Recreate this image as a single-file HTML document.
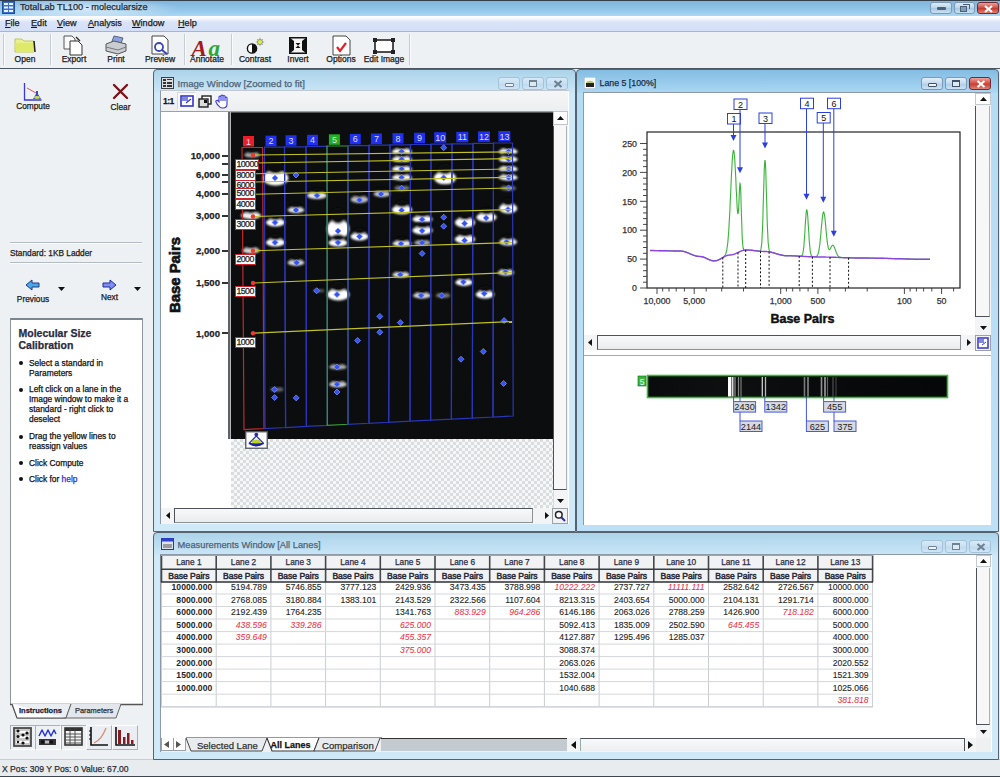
<!DOCTYPE html><html><head><meta charset="utf-8"><style>
*{margin:0;padding:0;box-sizing:border-box}
html,body{width:1000px;height:777px;overflow:hidden;background:#e9edf1;font-family:"Liberation Sans",sans-serif;font-size:11px;color:#000;position:relative}
.a{position:absolute}
.t{position:absolute;white-space:nowrap;line-height:1;-webkit-text-stroke:0.25px currentColor}
.tbtn{position:absolute;top:2px;height:12px;border:1px solid #7d9ab5;border-radius:3px;background:linear-gradient(#dcebf7,#b9d5ec 50%,#a7c7e2 51%,#c9e0f2)}
</style></head><body>
<div class="a" style="left:0px;top:0px;width:1000px;height:16px;background:linear-gradient(#7fb6dc,#93c6e8 60%,#a9d8f4);border-top:1px solid #33404c"></div>
<div class="a" style="left:0px;top:1px;width:200px;height:15px;background:radial-gradient(ellipse 95px 11px at 85px 8px,rgba(235,245,252,0.75),rgba(235,245,252,0.35) 60%,rgba(235,245,252,0) 100%)"></div>
<svg class="a" style="left:2px;top:1px" width="13" height="13"><rect x="0.5" y="0.5" width="12" height="12" fill="#3d70c6" stroke="#1d4fa0"/><g fill="#eaf2fc"><rect x="2" y="2" width="4" height="2"/><rect x="7" y="2" width="4" height="2"/><rect x="2" y="5.5" width="4" height="2"/><rect x="7" y="5.5" width="4" height="2"/><rect x="2" y="9" width="4" height="2"/><rect x="7" y="9" width="4" height="2"/></g></svg>
<div class="t" style="left:20px;top:3.25px;font-size:9.2px;color:#1f2c3a;">TotalLab TL100 - molecularsize</div>
<div class="tbtn" style="left:930px;width:22px"><div class="a" style="left:6px;top:4px;width:9px;height:3px;background:#4d6074;border-radius:1px"></div></div>
<div class="tbtn" style="left:954px;width:21px"><div class="a" style="left:5px;top:3px;width:7px;height:6px;border:1px solid #4d6074;background:#7f9cb8"></div><div class="a" style="left:8px;top:1px;width:7px;height:5px;border:1px solid #4d6074;border-bottom:none;border-left:none"></div></div>
<div class="tbtn" style="left:977px;width:22px;background:linear-gradient(#e9a29b,#d4463a 50%,#c5352a 51%,#de8173);border-color:#6e2a36"><svg class="a" style="left:6px;top:2px" width="9" height="8"><path d="M1 1L8 7M8 1L1 7" stroke="#fff" stroke-width="2.2"/></svg></div>
<div class="a" style="left:0px;top:16px;width:1000px;height:16px;background:linear-gradient(#ffffff,#f4f8fd 18%,#d9e4f8 40%,#d3dff7);border-bottom:1px solid #a9b5bf"></div>
<div class="t" style="left:5px;top:19.1px;font-size:9.1px;color:#1b1b1b;"><u>F</u>ile</div>
<div class="t" style="left:31px;top:19.1px;font-size:9.1px;color:#1b1b1b;"><u>E</u>dit</div>
<div class="t" style="left:57px;top:19.1px;font-size:9.1px;color:#1b1b1b;"><u>V</u>iew</div>
<div class="t" style="left:88px;top:19.1px;font-size:9.1px;color:#1b1b1b;"><u>A</u>nalysis</div>
<div class="t" style="left:132px;top:19.1px;font-size:9.1px;color:#1b1b1b;"><u>W</u>indow</div>
<div class="t" style="left:178px;top:19.1px;font-size:9.1px;color:#1b1b1b;"><u>H</u>elp</div>
<div class="a" style="left:0px;top:32px;width:1000px;height:37px;background:#edf1f3;border-bottom:1.2px solid #4c5660"></div>
<div class="a" style="left:3px;top:34px;width:1px;height:31px;background:#c5ccd3"></div>
<div class="a" style="left:4px;top:34px;width:1px;height:31px;background:#fafbfc"></div>
<div class="a" style="left:50px;top:34px;width:1px;height:31px;background:#c5ccd3"></div>
<div class="a" style="left:51px;top:34px;width:1px;height:31px;background:#fafbfc"></div>
<div class="a" style="left:184px;top:34px;width:1px;height:31px;background:#c5ccd3"></div>
<div class="a" style="left:185px;top:34px;width:1px;height:31px;background:#fafbfc"></div>
<div class="a" style="left:231px;top:34px;width:1px;height:31px;background:#c5ccd3"></div>
<div class="a" style="left:232px;top:34px;width:1px;height:31px;background:#fafbfc"></div>
<div class="a" style="left:409px;top:34px;width:1px;height:31px;background:#c5ccd3"></div>
<div class="a" style="left:410px;top:34px;width:1px;height:31px;background:#fafbfc"></div>
<div class="t" style="left:-75px;width:200px;text-align:center;top:55.01px;font-size:8.5px;color:#1a1a1a;">Open</div>
<div class="t" style="left:-26px;width:200px;text-align:center;top:55.01px;font-size:8.5px;color:#1a1a1a;">Export</div>
<div class="t" style="left:16px;width:200px;text-align:center;top:55.01px;font-size:8.5px;color:#1a1a1a;">Print</div>
<div class="t" style="left:60px;width:200px;text-align:center;top:55.01px;font-size:8.5px;color:#1a1a1a;">Preview</div>
<div class="t" style="left:107px;width:200px;text-align:center;top:55.01px;font-size:8.5px;color:#1a1a1a;">Annotate</div>
<div class="t" style="left:155px;width:200px;text-align:center;top:55.01px;font-size:8.5px;color:#1a1a1a;">Contrast</div>
<div class="t" style="left:198px;width:200px;text-align:center;top:55.01px;font-size:8.5px;color:#1a1a1a;">Invert</div>
<div class="t" style="left:241px;width:200px;text-align:center;top:55.01px;font-size:8.5px;color:#1a1a1a;">Options</div>
<div class="t" style="left:284px;width:200px;text-align:center;top:55.01px;font-size:8.5px;color:#1a1a1a;">Edit Image</div>
<svg class="a" style="left:13px;top:36px" width="24" height="19"><path d="M2 3h7l2 2h10v11H2z" fill="#e9f28a" stroke="#b7bd3c" stroke-width="0.8"/><path d="M2 7h19l1 9H3z" fill="#dfe96a"/><path d="M21 5l1 11" stroke="#222" stroke-width="1.5"/></svg>
<svg class="a" style="left:62px;top:35px" width="24" height="21"><path d="M2 1h8l3 3v10H2z" fill="#fafafa" stroke="#555"/><path d="M8 6h8l4 4v10H8z" fill="#fff" stroke="#333"/><path d="M14 2l4 4" stroke="#222" stroke-width="1.3"/></svg>
<svg class="a" style="left:104px;top:35px" width="24" height="21"><path d="M10 1l9 2-3 8-9-2z" fill="#8ca0e6" stroke="#567"/><path d="M2 9l8-3 12 3v7l-8 3-12-3z" fill="#c9cdd2" stroke="#555"/><path d="M2 12l12 3 8-3" stroke="#777" fill="none"/></svg>
<svg class="a" style="left:149px;top:35px" width="24" height="21"><path d="M3 1h12l4 4v14H3z" fill="#fff" stroke="#444"/><circle cx="10" cy="12" r="4" fill="none" stroke="#3a46b8" stroke-width="1.8"/><path d="M13 15l5 4" stroke="#3a46b8" stroke-width="2"/></svg>
<svg class="a" style="left:185px;top:33px" width="45" height="26"><text x="6.5" y="22.5" font-family="Liberation Serif" font-size="23" font-weight="bold" font-style="italic" fill="#a41a1a">A</text><text x="23.5" y="22.5" font-family="Liberation Serif" font-size="23" font-weight="bold" font-style="italic" fill="#2ea82a">a</text></svg>
<svg class="a" style="left:245px;top:36px" width="20" height="19"><circle cx="7" cy="12.5" r="4.6" fill="#fff" stroke="#111" stroke-width="1.4"/><path d="M7 7.9a4.6 4.6 0 0 1 0 9.2z" fill="#111"/><path d="M15 1.5v8.5M10.8 6h8.4M12 3l6 6M18 3l-6 6" stroke="#8a8fb0" stroke-width="0.7"/><circle cx="15" cy="6" r="2.6" fill="#d8ec4a" stroke="#555" stroke-width="0.5"/></svg>
<svg class="a" style="left:289px;top:37px" width="18" height="17"><rect x="0.5" y="0.5" width="17" height="16" fill="#f4f4f4" stroke="#111" stroke-width="1"/><path d="M0 0L5 4V13L0 17Z M18 0L13 4V13L18 17Z" fill="#111"/><path d="M6.5 6H11.5L9 8.5L11.5 11H6.5L9 8.5Z" fill="#111"/><path d="M0 0.8H18M0 16.2H18" stroke="#111" stroke-width="1.6"/></svg>
<svg class="a" style="left:331px;top:35px" width="22" height="21"><path d="M2 1h13l4 4v15H2z" fill="#fff" stroke="#444"/><path d="M6 12l3 4 6-8" stroke="#e0202a" stroke-width="2.2" fill="none"/></svg>
<svg class="a" style="left:372px;top:37px" width="24" height="18"><rect x="3" y="3" width="18" height="12" fill="#fff" stroke="#222" stroke-width="1.6"/><rect x="1" y="1" width="4" height="4" fill="#222"/><rect x="19" y="1" width="4" height="4" fill="#222"/><rect x="1" y="13" width="4" height="4" fill="#222"/><rect x="19" y="13" width="4" height="4" fill="#222"/></svg>
<div class="a" style="left:0px;top:69px;width:153px;height:691px;background:#edf1f4"></div>
<svg class="a" style="left:22px;top:83px" width="22" height="19"><path d="M2.5 0v17h17" stroke="#3a3ad0" stroke-width="1.3" fill="none"/><path d="M5 5l9 5" stroke="#e04050" stroke-width="0.9"/><path d="M14 8h2v3l3 5h-8l3-5z" fill="#3848c8"/><ellipse cx="15" cy="14.5" rx="3" ry="1.4" fill="#c8d84a"/></svg>
<div class="t" style="left:-67px;width:200px;text-align:center;top:102.31px;font-size:8.3px;color:#1a1a1a;">Compute</div>
<svg class="a" style="left:112px;top:83px" width="17" height="17"><path d="M2 2C6 6 10 10 15 15M15 2C11 6 6 11 2 15" stroke="#7a1418" stroke-width="2.4" fill="none" stroke-linecap="round"/></svg>
<div class="t" style="left:20.5px;width:200px;text-align:center;top:102.81px;font-size:8.3px;color:#1a1a1a;">Clear</div>
<div class="a" style="left:10px;top:242px;width:132px;height:1px;background:#b3bcc4"></div>
<div class="a" style="left:10px;top:243px;width:132px;height:1px;background:#fbfcfd"></div>
<div class="t" style="left:10px;top:248.81px;font-size:8.3px;color:#1a1a1a;">Standard: 1KB Ladder</div>
<div class="a" style="left:10px;top:262px;width:132px;height:1px;background:#b3bcc4"></div>
<div class="a" style="left:10px;top:263px;width:132px;height:1px;background:#fbfcfd"></div>
<svg class="a" style="left:25px;top:279px" width="15" height="12"><path d="M1 6L7 1v3h7v4H7v3z" fill="#4aa8e8" stroke="#1d3d8a" stroke-width="1"/></svg>
<div class="t" style="left:-67px;width:200px;text-align:center;top:294.81px;font-size:8.3px;color:#1a1a1a;">Previous</div>
<svg class="a" style="left:102px;top:279px" width="15" height="12"><path d="M14 6L8 1v3H1v4h7v3z" fill="#7f8ff0" stroke="#1d2d9a" stroke-width="1"/></svg>
<div class="t" style="left:9.5px;width:200px;text-align:center;top:292.81px;font-size:8.3px;color:#1a1a1a;">Next</div>
<svg class="a" style="left:58px;top:287px" width="7" height="4"><path d="M0 0h7L3.5 4z" fill="#111"/></svg>
<svg class="a" style="left:134px;top:287px" width="7" height="4"><path d="M0 0h7L3.5 4z" fill="#111"/></svg>
<div class="a" style="left:10px;top:318px;width:133px;height:387px;background:#fff;border:1px solid #8d979f;border-bottom:none;border-top:2px solid #7c868e"></div>
<div class="t" style="left:18.5px;top:327.5px;font-size:10.5px;color:#2a2a40;font-weight:bold;">Molecular Size</div>
<div class="t" style="left:18.5px;top:339.7px;font-size:10.5px;color:#2a2a40;font-weight:bold;">Calibration</div>
<div class="a" style="left:19px;top:360.9px;width:4px;height:4px;background:#111;border-radius:50%"></div>
<div class="t" style="left:29px;top:358.66px;font-size:8.4px;color:#111;">Select a standard in</div>
<div class="t" style="left:29px;top:368.66px;font-size:8.4px;color:#111;">Parameters</div>
<div class="a" style="left:19px;top:387.6px;width:4px;height:4px;background:#111;border-radius:50%"></div>
<div class="t" style="left:29px;top:385.36px;font-size:8.4px;color:#111;">Left click on a lane in the</div>
<div class="t" style="left:29px;top:395.36px;font-size:8.4px;color:#111;">Image window to make it a</div>
<div class="t" style="left:29px;top:405.36px;font-size:8.4px;color:#111;">standard - right click to</div>
<div class="t" style="left:29px;top:415.36px;font-size:8.4px;color:#111;">deselect</div>
<div class="a" style="left:19px;top:434.5px;width:4px;height:4px;background:#111;border-radius:50%"></div>
<div class="t" style="left:29px;top:432.26px;font-size:8.4px;color:#111;">Drag the yellow lines to</div>
<div class="t" style="left:29px;top:442.26px;font-size:8.4px;color:#111;">reassign values</div>
<div class="a" style="left:19px;top:460.9px;width:4px;height:4px;background:#111;border-radius:50%"></div>
<div class="t" style="left:29px;top:458.66px;font-size:8.4px;color:#111;">Click Compute</div>
<div class="a" style="left:19px;top:476.9px;width:4px;height:4px;background:#111;border-radius:50%"></div>
<div class="t" style="left:29px;top:474.66px;font-size:8.4px;color:#111;">Click for <span style="color:#2233dd">help</span></div>
<svg class="a" style="left:10px;top:703px" width="133" height="16"><path d="M0 1.5H133" stroke="#555" stroke-width="1.5"/><path d="M56 1V14H13L8 1" fill="#fff"/><path d="M2 1l5 14h49l5-14" fill="#eaeef2" stroke="#666" stroke-width="1"/><path d="M2 1l5 14h49" fill="#ffffff" stroke="#555" stroke-width="1.2"/><path d="M61 1l-5 14h50l5-14" fill="#e3e7eb" stroke="#666" stroke-width="1"/></svg>
<div class="t" style="left:19px;top:707.21px;font-size:7.5px;color:#222238;font-weight:bold;">Instructions</div>
<div class="t" style="left:75px;top:707.26px;font-size:7.4px;color:#333;">Parameters</div>
<div class="a" style="left:10px;top:725px;width:26px;height:25px;border:1px solid #aab3bb;border-right-color:#fff;border-bottom-color:#fff;background:#eef1f4"></div>
<div class="a" style="left:35px;top:725px;width:26px;height:25px;border:1px solid #aab3bb;border-right-color:#fff;border-bottom-color:#fff;background:#eef1f4"></div>
<div class="a" style="left:61px;top:725px;width:26px;height:25px;border:1px solid #aab3bb;border-right-color:#fff;border-bottom-color:#fff;background:#eef1f4"></div>
<div class="a" style="left:86px;top:725px;width:26px;height:25px;border:1px solid #fff;border-right-color:#aab3bb;border-bottom-color:#aab3bb;background:#eaeef2"></div>
<div class="a" style="left:112px;top:725px;width:26px;height:25px;border:1px solid #fff;border-right-color:#aab3bb;border-bottom-color:#aab3bb;background:#eaeef2"></div>
<svg class="a" style="left:13px;top:727px" width="19" height="20"><rect x="1" y="1" width="17" height="18" fill="#c8c8c8" stroke="#4a4a4a" stroke-width="1.8"/><g fill="#fff"><rect x="3" y="4" width="13" height="2"/><rect x="3" y="9" width="13" height="2"/><rect x="3" y="14" width="13" height="2"/></g><g fill="#111"><circle cx="5" cy="4" r="1.6"/><circle cx="14" cy="6" r="1.6"/><circle cx="5" cy="9.5" r="1.6"/><circle cx="10" cy="8" r="1.6"/><circle cx="14" cy="11" r="1.6"/><circle cx="10" cy="16" r="1.6"/><circle cx="5" cy="15" r="1.2"/></g></svg>
<svg class="a" style="left:38px;top:727px" width="20" height="20"><path d="M1 9L4 3L7 9L10 3L13 9L16 3L18 7" stroke="#2a35d8" stroke-width="1.5" fill="none" stroke-linejoin="round"/><rect x="1" y="12" width="17" height="6" fill="#333"/><rect x="3" y="13.5" width="3" height="3" fill="#111"/><rect x="7" y="13.5" width="4" height="3" fill="#bbb"/><rect x="12" y="13.5" width="3" height="3" fill="#111"/></svg>
<svg class="a" style="left:64px;top:727px" width="20" height="19"><rect x="1" y="1" width="17" height="17" fill="#f4f4f4" stroke="#333" stroke-width="1.6"/><rect x="1" y="1" width="17" height="3" fill="#333"/><path d="M1 7h17M1 10h17M1 13h17M1 16h17M6 1v17M11 1v17" stroke="#444" stroke-width="0.9"/></svg>
<svg class="a" style="left:89px;top:726px" width="20" height="21"><path d="M2 1v18h17" stroke="#111" stroke-width="1.6" fill="none"/><path d="M0 5h2M0 9h2M0 13h2" stroke="#111"/><path d="M5 17C10 15 14 10 17 2" stroke="#d88a70" stroke-width="1.2" fill="none"/></svg>
<svg class="a" style="left:114px;top:726px" width="22" height="21"><path d="M2 1v18h19" stroke="#111" stroke-width="1.6" fill="none"/><g fill="#8a1a22"><rect x="4" y="4" width="3" height="14"/><rect x="9" y="11" width="2.5" height="7"/><rect x="13" y="7" width="2.5" height="11"/><rect x="17" y="14" width="2.5" height="4"/></g></svg>
<div class="a" style="left:0px;top:759px;width:1000px;height:18px;background:#e9ecef;border-top:1px solid #c6cdd3"></div>
<div class="a" style="left:0px;top:776px;width:1000px;height:1px;background:#3e474f"></div>
<div class="t" style="left:2px;top:765.16px;font-size:8.6px;color:#2a2f38;">X Pos: 309 Y Pos: 0 Value: 67.00</div>
<div class="a" style="left:153px;top:69px;width:423px;height:463px;background:linear-gradient(#acd3e9,#cae6f7 22px,#d0e9f8 23px,#d0e9f8);border:1px solid #56636e;border-radius:4px 4px 0 0"></div>
<svg class="a" style="left:161px;top:77px" width="13" height="12"><rect x="0.5" y="0.5" width="12" height="11" fill="#d9dde2" stroke="#3c4046"/><g fill="#333"><rect x="2" y="2" width="3" height="2"/><rect x="6" y="2" width="5" height="1"/><rect x="2" y="5" width="3" height="2"/><rect x="6" y="5" width="5" height="2"/><rect x="2" y="8" width="3" height="2"/><rect x="6" y="8" width="5" height="2"/></g></svg>
<div class="t" style="left:177.5px;top:78.95px;font-size:9.6px;color:#4d6478;">Image Window [Zoomed to fit]</div>
<div style="position:absolute;top:77px;left:498.4px;width:22px;height:12.5px;border:1px solid #a3c1d8;border-radius:3px;background:linear-gradient(#d8eaf7,#c8e0f2 50%,#bcd8ee 51%,#d0e6f6)"></div>
<div style="position:absolute;top:77px;left:522.0px;width:22px;height:12.5px;border:1px solid #a3c1d8;border-radius:3px;background:linear-gradient(#d8eaf7,#c8e0f2 50%,#bcd8ee 51%,#d0e6f6)"></div>
<div style="position:absolute;top:77px;left:545.6px;width:22px;height:12.5px;border:1px solid #a3c1d8;border-radius:3px;background:linear-gradient(#d8eaf7,#c8e0f2 50%,#bcd8ee 51%,#d0e6f6)"></div>
<div class="a" style="left:505.0px;top:83px;width:8.5px;height:3.5px;border:1px solid #6f8294;border-radius:1px;background:#eef4f9"></div>
<div class="a" style="left:528.9px;top:80px;width:8.5px;height:6.5px;border:1px solid #6f8294;border-top-width:2px;background:#dfe9f2"></div>
<svg class="a" style="left:552.6px;top:80px" width="10" height="8"><path d="M1.5 1L8.5 7M8.5 1L1.5 7" stroke="#6d8092" stroke-width="2.1"/></svg>
<div class="a" style="left:160px;top:90px;width:409px;height:434px;background:#fff;border-top:1px solid #c0c9d0;border-left:1px solid #8d9aa5"></div>
<div class="a" style="left:161px;top:91px;width:407px;height:20px;background:linear-gradient(#f4f5f6,#eceff1)"></div>
<div class="t" style="left:163px;top:97.21px;font-size:8.5px;color:#14143a;font-weight:bold;letter-spacing:-0.5px">1:1</div>
<div class="a" style="left:177px;top:92px;width:19px;height:18px;border:1px solid #d4d8dc;border-right-color:#fff;border-bottom-color:#fff;background:#f8f9fa"></div>
<svg class="a" style="left:180px;top:95px" width="14" height="12"><rect x="1" y="1" width="12" height="10" fill="#fff" stroke="#3535c8" stroke-width="1.6"/><rect x="2" y="2" width="6" height="4" fill="#7d8ad8"/><path d="M6 8l5-4" stroke="#3535c8" stroke-width="1.2"/></svg>
<svg class="a" style="left:198px;top:95px" width="14" height="13"><rect x="4" y="1" width="9" height="8" fill="#fff" stroke="#222" stroke-width="1.4"/><rect x="1" y="4" width="9" height="8" fill="#ddd" stroke="#222" stroke-width="1.4"/><rect x="6" y="5" width="3" height="3" fill="#111"/></svg>
<svg class="a" style="left:215px;top:94px" width="14" height="15"><path d="M4 8V3a1 1 0 0 1 2 0v4V2a1 1 0 0 1 2 0v5V2.5a1 1 0 0 1 2 0V7V4a1 1 0 0 1 2 0v6c0 3-2 4-4 4H7c-2 0-3-2-5-4l-1-2a1 1 0 0 1 2-1z" fill="#fff" stroke="#3a3ad8" stroke-width="1.1"/></svg>
<div class="a" style="left:161px;top:111px;width:68px;height:397px;background:#fff"></div>
<div class="a" style="left:161px;top:111px;width:407px;height:1.2px;background:#9aa2a8"></div>
<div class="a" style="left:228px;top:112px;width:1.6px;height:327px;background:#5d6266"></div>
<div class="a" style="left:229.6px;top:112px;width:1.4px;height:327px;background:#b4b8bb"></div>
<div class="t" style="left:-80px;width:300px;text-align:right;top:151.05px;font-size:9.6px;color:#1e1e1e;font-weight:bold;">10,000</div>
<div class="a" style="left:222px;top:155px;width:6px;height:1.6px;background:#333"></div>
<div class="t" style="left:-80px;width:300px;text-align:right;top:169.75px;font-size:9.6px;color:#1e1e1e;font-weight:bold;">6,000</div>
<div class="a" style="left:222px;top:174px;width:6px;height:1.6px;background:#333"></div>
<div class="t" style="left:-80px;width:300px;text-align:right;top:189.35px;font-size:9.6px;color:#1e1e1e;font-weight:bold;">4,000</div>
<div class="a" style="left:222px;top:193px;width:6px;height:1.6px;background:#333"></div>
<div class="t" style="left:-80px;width:300px;text-align:right;top:211.45px;font-size:9.6px;color:#1e1e1e;font-weight:bold;">3,000</div>
<div class="a" style="left:222px;top:215px;width:6px;height:1.6px;background:#333"></div>
<div class="t" style="left:-80px;width:300px;text-align:right;top:245.95px;font-size:9.6px;color:#1e1e1e;font-weight:bold;">2,000</div>
<div class="a" style="left:222px;top:250px;width:6px;height:1.6px;background:#333"></div>
<div class="t" style="left:-80px;width:300px;text-align:right;top:278.15px;font-size:9.6px;color:#1e1e1e;font-weight:bold;">1,500</div>
<div class="a" style="left:222px;top:282px;width:6px;height:1.6px;background:#333"></div>
<div class="t" style="left:-80px;width:300px;text-align:right;top:328.55px;font-size:9.6px;color:#1e1e1e;font-weight:bold;">1,000</div>
<div class="a" style="left:222px;top:332px;width:6px;height:1.6px;background:#333"></div>
<div class="a" style="left:222px;top:163px;width:6px;height:1.6px;background:#333"></div>
<div class="a" style="left:222px;top:181px;width:6px;height:1.6px;background:#333"></div>
<div class="t" style="left:105px;top:268px;width:140px;text-align:center;font-size:14.9px;font-weight:bold;color:#111;-webkit-text-stroke:0.7px #111;transform:rotate(-90deg);transform-origin:70px 7px">Base Pairs</div>
<svg class="a" style="left:230px;top:111px" width="323" height="328" viewBox="230 111 323 328"><defs><filter id="bl" x="-50%" y="-100%" width="200%" height="300%"><feGaussianBlur stdDeviation="1.1 0.9"/></filter><filter id="bl2" x="-50%" y="-50%" width="200%" height="200%"><feGaussianBlur stdDeviation="0.5"/></filter></defs><rect x="231" y="112.3" width="322" height="327" fill="#0b0d0e"/><g filter="url(#bl)" opacity="0.67"><ellipse cx="252" cy="155" rx="7.84" ry="2.5" fill="#fff"/><ellipse cx="252" cy="151.70" rx="5.33" ry="2.00" fill="#0b0d0e"/></g><g filter="url(#bl)" opacity="0.95"><ellipse cx="251" cy="215.5" rx="10.08" ry="3.5" fill="#fff"/><ellipse cx="251" cy="210.88" rx="6.85" ry="2.80" fill="#0b0d0e"/></g><g filter="url(#bl)" opacity="0.84"><ellipse cx="251" cy="250.5" rx="8.96" ry="3.0" fill="#fff"/><ellipse cx="251" cy="246.54" rx="6.09" ry="2.40" fill="#0b0d0e"/></g><g filter="url(#bl)" opacity="1.00"><ellipse cx="275.5" cy="178" rx="12.88" ry="7.5" fill="#fff"/><ellipse cx="275.5" cy="168.10" rx="8.76" ry="6.00" fill="#0b0d0e"/></g><g filter="url(#bl)" opacity="1.00"><ellipse cx="275.5" cy="222.5" rx="9.52" ry="4.0" fill="#fff"/><ellipse cx="275.5" cy="217.22" rx="6.47" ry="3.20" fill="#0b0d0e"/></g><g filter="url(#bl)" opacity="1.00"><ellipse cx="275.5" cy="242.5" rx="9.52" ry="4.0" fill="#fff"/><ellipse cx="275.5" cy="237.22" rx="6.47" ry="3.20" fill="#0b0d0e"/></g><g filter="url(#bl)" opacity="0.39"><ellipse cx="277" cy="389.5" rx="6.72" ry="2.0" fill="#fff"/><ellipse cx="277" cy="386.86" rx="4.57" ry="1.60" fill="#0b0d0e"/></g><g filter="url(#bl)" opacity="0.90"><ellipse cx="296" cy="210" rx="8.40" ry="3.0" fill="#fff"/><ellipse cx="296" cy="206.04" rx="5.71" ry="2.40" fill="#0b0d0e"/></g><g filter="url(#bl)" opacity="0.84"><ellipse cx="296" cy="262.7" rx="8.40" ry="3.0" fill="#fff"/><ellipse cx="296" cy="258.74" rx="5.71" ry="2.40" fill="#0b0d0e"/></g><g filter="url(#bl)" opacity="0.90"><ellipse cx="317" cy="195.5" rx="10.08" ry="3.5" fill="#fff"/><ellipse cx="317" cy="190.88" rx="6.85" ry="2.80" fill="#0b0d0e"/></g><g filter="url(#bl)" opacity="0.34"><ellipse cx="319" cy="290.7" rx="5.60" ry="1.5" fill="#fff"/><ellipse cx="319" cy="288.72" rx="3.81" ry="1.20" fill="#0b0d0e"/></g><g filter="url(#bl)" opacity="1.00"><ellipse cx="338" cy="229" rx="11.20" ry="10.0" fill="#fff"/><ellipse cx="338" cy="215.80" rx="7.62" ry="8.00" fill="#0b0d0e"/></g><g filter="url(#bl)" opacity="1.00"><ellipse cx="338" cy="242.8" rx="9.52" ry="3.75" fill="#fff"/><ellipse cx="338" cy="237.85" rx="6.47" ry="3.00" fill="#0b0d0e"/></g><g filter="url(#bl)" opacity="1.00"><ellipse cx="338.3" cy="294.6" rx="11.20" ry="6.0" fill="#fff"/><ellipse cx="338.3" cy="286.68" rx="7.62" ry="4.80" fill="#0b0d0e"/></g><g filter="url(#bl)" opacity="0.67"><ellipse cx="338" cy="367" rx="8.96" ry="2.5" fill="#fff"/><ellipse cx="338" cy="363.70" rx="6.09" ry="2.00" fill="#0b0d0e"/></g><g filter="url(#bl)" opacity="0.78"><ellipse cx="338" cy="384.3" rx="8.96" ry="3.0" fill="#fff"/><ellipse cx="338" cy="380.34" rx="6.09" ry="2.40" fill="#0b0d0e"/></g><g filter="url(#bl)" opacity="0.73"><ellipse cx="359.5" cy="199.5" rx="8.96" ry="3.5" fill="#fff"/><ellipse cx="359.5" cy="194.88" rx="6.09" ry="2.80" fill="#0b0d0e"/></g><g filter="url(#bl)" opacity="1.00"><ellipse cx="359.5" cy="236.5" rx="8.96" ry="4.0" fill="#fff"/><ellipse cx="359.5" cy="231.22" rx="6.09" ry="3.20" fill="#0b0d0e"/></g><g filter="url(#bl)" opacity="0.78"><ellipse cx="382" cy="194" rx="8.40" ry="3.0" fill="#fff"/><ellipse cx="382" cy="190.04" rx="5.71" ry="2.40" fill="#0b0d0e"/></g><g filter="url(#bl)" opacity="1.00"><ellipse cx="402" cy="151.6" rx="10.08" ry="3.0" fill="#fff"/><ellipse cx="402" cy="147.64" rx="6.85" ry="2.40" fill="#0b0d0e"/></g><g filter="url(#bl)" opacity="1.00"><ellipse cx="402" cy="159.3" rx="10.08" ry="3.0" fill="#fff"/><ellipse cx="402" cy="155.34" rx="6.85" ry="2.40" fill="#0b0d0e"/></g><g filter="url(#bl)" opacity="1.00"><ellipse cx="402" cy="169" rx="10.08" ry="3.0" fill="#fff"/><ellipse cx="402" cy="165.04" rx="6.85" ry="2.40" fill="#0b0d0e"/></g><g filter="url(#bl)" opacity="1.00"><ellipse cx="402" cy="177.5" rx="10.08" ry="3.0" fill="#fff"/><ellipse cx="402" cy="173.54" rx="6.85" ry="2.40" fill="#0b0d0e"/></g><g filter="url(#bl)" opacity="0.45"><ellipse cx="402" cy="188.2" rx="7.84" ry="2.5" fill="#fff"/><ellipse cx="402" cy="184.90" rx="5.33" ry="2.00" fill="#0b0d0e"/></g><g filter="url(#bl)" opacity="1.00"><ellipse cx="402" cy="209.8" rx="10.08" ry="4.5" fill="#fff"/><ellipse cx="402" cy="203.86" rx="6.85" ry="3.60" fill="#0b0d0e"/></g><g filter="url(#bl)" opacity="0.95"><ellipse cx="402" cy="243.5" rx="9.52" ry="3.0" fill="#fff"/><ellipse cx="402" cy="239.54" rx="6.47" ry="2.40" fill="#0b0d0e"/></g><g filter="url(#bl)" opacity="0.90"><ellipse cx="401" cy="274.8" rx="8.68" ry="2.75" fill="#fff"/><ellipse cx="401" cy="271.17" rx="5.90" ry="2.20" fill="#0b0d0e"/></g><g filter="url(#bl)" opacity="1.00"><ellipse cx="422.5" cy="219.2" rx="10.08" ry="3.5" fill="#fff"/><ellipse cx="422.5" cy="214.58" rx="6.85" ry="2.80" fill="#0b0d0e"/></g><g filter="url(#bl)" opacity="1.00"><ellipse cx="422.5" cy="230.4" rx="10.08" ry="4.0" fill="#fff"/><ellipse cx="422.5" cy="225.12" rx="6.85" ry="3.20" fill="#0b0d0e"/></g><g filter="url(#bl)" opacity="0.67"><ellipse cx="422.5" cy="242.7" rx="8.40" ry="2.5" fill="#fff"/><ellipse cx="422.5" cy="239.40" rx="5.71" ry="2.00" fill="#0b0d0e"/></g><g filter="url(#bl)" opacity="0.84"><ellipse cx="422" cy="295.5" rx="8.96" ry="3.0" fill="#fff"/><ellipse cx="422" cy="291.54" rx="6.09" ry="2.40" fill="#0b0d0e"/></g><g filter="url(#bl)" opacity="1.00"><ellipse cx="445" cy="177.8" rx="11.20" ry="6.5" fill="#fff"/><ellipse cx="445" cy="169.22" rx="7.62" ry="5.20" fill="#0b0d0e"/></g><g filter="url(#bl)" opacity="0.45"><ellipse cx="443" cy="295.5" rx="7.28" ry="2.5" fill="#fff"/><ellipse cx="443" cy="292.20" rx="4.95" ry="2.00" fill="#0b0d0e"/></g><g filter="url(#bl)" opacity="1.00"><ellipse cx="465" cy="222.6" rx="10.08" ry="5.0" fill="#fff"/><ellipse cx="465" cy="216.00" rx="6.85" ry="4.00" fill="#0b0d0e"/></g><g filter="url(#bl)" opacity="1.00"><ellipse cx="465" cy="239.3" rx="10.08" ry="4.25" fill="#fff"/><ellipse cx="465" cy="233.69" rx="6.85" ry="3.40" fill="#0b0d0e"/></g><g filter="url(#bl)" opacity="1.00"><ellipse cx="464" cy="282.4" rx="8.68" ry="3.5" fill="#fff"/><ellipse cx="464" cy="277.78" rx="5.90" ry="2.80" fill="#0b0d0e"/></g><g filter="url(#bl)" opacity="1.00"><ellipse cx="486.5" cy="217.2" rx="10.08" ry="4.5" fill="#fff"/><ellipse cx="486.5" cy="211.26" rx="6.85" ry="3.60" fill="#0b0d0e"/></g><g filter="url(#bl)" opacity="1.00"><ellipse cx="485" cy="294.5" rx="9.24" ry="4.0" fill="#fff"/><ellipse cx="485" cy="289.22" rx="6.28" ry="3.20" fill="#0b0d0e"/></g><g filter="url(#bl)" opacity="1.00"><ellipse cx="508.2" cy="151.6" rx="9.52" ry="3.0" fill="#fff"/><ellipse cx="508.2" cy="147.64" rx="6.47" ry="2.40" fill="#0b0d0e"/></g><g filter="url(#bl)" opacity="1.00"><ellipse cx="508.2" cy="159.3" rx="9.52" ry="3.0" fill="#fff"/><ellipse cx="508.2" cy="155.34" rx="6.47" ry="2.40" fill="#0b0d0e"/></g><g filter="url(#bl)" opacity="1.00"><ellipse cx="508.2" cy="169" rx="9.52" ry="3.0" fill="#fff"/><ellipse cx="508.2" cy="165.04" rx="6.47" ry="2.40" fill="#0b0d0e"/></g><g filter="url(#bl)" opacity="1.00"><ellipse cx="508.2" cy="177.5" rx="9.52" ry="3.0" fill="#fff"/><ellipse cx="508.2" cy="173.54" rx="6.47" ry="2.40" fill="#0b0d0e"/></g><g filter="url(#bl)" opacity="0.45"><ellipse cx="508.2" cy="188.2" rx="7.84" ry="2.5" fill="#fff"/><ellipse cx="508.2" cy="184.90" rx="5.33" ry="2.00" fill="#0b0d0e"/></g><g filter="url(#bl)" opacity="1.00"><ellipse cx="508.2" cy="208.4" rx="8.96" ry="5.0" fill="#fff"/><ellipse cx="508.2" cy="201.80" rx="6.09" ry="4.00" fill="#0b0d0e"/></g><g filter="url(#bl)" opacity="0.95"><ellipse cx="508.2" cy="242" rx="8.96" ry="3.5" fill="#fff"/><ellipse cx="508.2" cy="237.38" rx="6.09" ry="2.80" fill="#0b0d0e"/></g><g filter="url(#bl)" opacity="0.95"><ellipse cx="506" cy="272.5" rx="8.12" ry="3.0" fill="#fff"/><ellipse cx="506" cy="268.54" rx="5.52" ry="2.40" fill="#0b0d0e"/></g><path d="M242 147.5L262.5 147.5L264 428.5L244 429.6Z" fill="none" stroke="#c02a2a" stroke-width="1.2"/><path d="M264.5 147.1L284.5 147.1L285.6 427.5L265 428.5Z" fill="none" stroke="#2a36b8" stroke-width="1.2"/><path d="M284.5 146.8L306 146.8L306.4 426.4L285.6 427.5Z" fill="none" stroke="#2a36b8" stroke-width="1.2"/><path d="M306 146.4L327 146.4L327.3 425.4L306.4 426.4Z" fill="none" stroke="#2a36b8" stroke-width="1.2"/><path d="M327 146.0L348 146.0L348 424.3L327.3 425.4Z" fill="none" stroke="#3a9a3a" stroke-width="1.2"/><path d="M348 145.6L369 145.6L369 423.3L348 424.3Z" fill="none" stroke="#2a36b8" stroke-width="1.2"/><path d="M369 145.2L390 145.2L388.7 422.3L369 423.3Z" fill="none" stroke="#2a36b8" stroke-width="1.2"/><path d="M390 144.9L410.5 144.9L410 421.2L388.7 422.3Z" fill="none" stroke="#2a36b8" stroke-width="1.2"/><path d="M410.5 144.5L431 144.5L430.6 420.2L410 421.2Z" fill="none" stroke="#2a36b8" stroke-width="1.2"/><path d="M431 144.1L452 144.1L451.4 419.1L430.6 420.2Z" fill="none" stroke="#2a36b8" stroke-width="1.2"/><path d="M452 143.8L473 143.8L472.3 418.1L451.4 419.1Z" fill="none" stroke="#2a36b8" stroke-width="1.2"/><path d="M473 143.4L493.5 143.4L493 417.0L472.3 418.1Z" fill="none" stroke="#2a36b8" stroke-width="1.2"/><path d="M493.5 143.0L512.5 143.0L513.2 416.0L493 417.0Z" fill="none" stroke="#2a36b8" stroke-width="1.2"/><path d="M275 175L278 178L275 181L272 178Z" fill="#3553f2" stroke="#7f95ff" stroke-width="0.7"/><path d="M275 219.5L278 222.5L275 225.5L272 222.5Z" fill="#3553f2" stroke="#7f95ff" stroke-width="0.7"/><path d="M275 239.5L278 242.5L275 245.5L272 242.5Z" fill="#3553f2" stroke="#7f95ff" stroke-width="0.7"/><path d="M274.6 386.5L277.6 389.5L274.6 392.5L271.6 389.5Z" fill="#3553f2" stroke="#7f95ff" stroke-width="0.7"/><path d="M274.6 394.5L277.6 397.5L274.6 400.5L271.6 397.5Z" fill="#3553f2" stroke="#7f95ff" stroke-width="0.7"/><path d="M296 172L299 175L296 178L293 175Z" fill="#3553f2" stroke="#7f95ff" stroke-width="0.7"/><path d="M296 207L299 210L296 213L293 210Z" fill="#3553f2" stroke="#7f95ff" stroke-width="0.7"/><path d="M296.6 259.7L299.6 262.7L296.6 265.7L293.6 262.7Z" fill="#3553f2" stroke="#7f95ff" stroke-width="0.7"/><path d="M296.2 394.9L299.2 397.9L296.2 400.9L293.2 397.9Z" fill="#3553f2" stroke="#7f95ff" stroke-width="0.7"/><path d="M317 192.5L320 195.5L317 198.5L314 195.5Z" fill="#3553f2" stroke="#7f95ff" stroke-width="0.7"/><path d="M316.7 287.7L319.7 290.7L316.7 293.7L313.7 290.7Z" fill="#3553f2" stroke="#7f95ff" stroke-width="0.7"/><path d="M338 228L341 231L338 234L335 231Z" fill="#3553f2" stroke="#7f95ff" stroke-width="0.7"/><path d="M338 239.5L341 242.5L338 245.5L335 242.5Z" fill="#3553f2" stroke="#7f95ff" stroke-width="0.7"/><path d="M337 291.6L340 294.6L337 297.6L334 294.6Z" fill="#3553f2" stroke="#7f95ff" stroke-width="0.7"/><path d="M337 364L340 367L337 370L334 367Z" fill="#3553f2" stroke="#7f95ff" stroke-width="0.7"/><path d="M337 381.3L340 384.3L337 387.3L334 384.3Z" fill="#3553f2" stroke="#7f95ff" stroke-width="0.7"/><path d="M337 389L340 392L337 395L334 392Z" fill="#3553f2" stroke="#7f95ff" stroke-width="0.7"/><path d="M359.5 197L362.5 200L359.5 203L356.5 200Z" fill="#3553f2" stroke="#7f95ff" stroke-width="0.7"/><path d="M359.5 233.5L362.5 236.5L359.5 239.5L356.5 236.5Z" fill="#3553f2" stroke="#7f95ff" stroke-width="0.7"/><path d="M357.6 337.5L360.6 340.5L357.6 343.5L354.6 340.5Z" fill="#3553f2" stroke="#7f95ff" stroke-width="0.7"/><path d="M381 191L384 194L381 197L378 194Z" fill="#3553f2" stroke="#7f95ff" stroke-width="0.7"/><path d="M379.8 313.4L382.8 316.4L379.8 319.4L376.8 316.4Z" fill="#3553f2" stroke="#7f95ff" stroke-width="0.7"/><path d="M379.8 329.2L382.8 332.2L379.8 335.2L376.8 332.2Z" fill="#3553f2" stroke="#7f95ff" stroke-width="0.7"/><path d="M401.6 148.6L404.6 151.6L401.6 154.6L398.6 151.6Z" fill="#3553f2" stroke="#7f95ff" stroke-width="0.7"/><path d="M401.6 156.3L404.6 159.3L401.6 162.3L398.6 159.3Z" fill="#3553f2" stroke="#7f95ff" stroke-width="0.7"/><path d="M401.6 166L404.6 169L401.6 172L398.6 169Z" fill="#3553f2" stroke="#7f95ff" stroke-width="0.7"/><path d="M401.6 174.5L404.6 177.5L401.6 180.5L398.6 177.5Z" fill="#3553f2" stroke="#7f95ff" stroke-width="0.7"/><path d="M401.6 185.2L404.6 188.2L401.6 191.2L398.6 188.2Z" fill="#3553f2" stroke="#7f95ff" stroke-width="0.7"/><path d="M401.6 207.3L404.6 210.3L401.6 213.3L398.6 210.3Z" fill="#3553f2" stroke="#7f95ff" stroke-width="0.7"/><path d="M401 240.8L404 243.8L401 246.8L398 243.8Z" fill="#3553f2" stroke="#7f95ff" stroke-width="0.7"/><path d="M400.3 271.7L403.3 274.7L400.3 277.7L397.3 274.7Z" fill="#3553f2" stroke="#7f95ff" stroke-width="0.7"/><path d="M400.3 319.6L403.3 322.6L400.3 325.6L397.3 322.6Z" fill="#3553f2" stroke="#7f95ff" stroke-width="0.7"/><path d="M422.1 216.5L425.1 219.5L422.1 222.5L419.1 219.5Z" fill="#3553f2" stroke="#7f95ff" stroke-width="0.7"/><path d="M422.1 227.8L425.1 230.8L422.1 233.8L419.1 230.8Z" fill="#3553f2" stroke="#7f95ff" stroke-width="0.7"/><path d="M422.1 239.7L425.1 242.7L422.1 245.7L419.1 242.7Z" fill="#3553f2" stroke="#7f95ff" stroke-width="0.7"/><path d="M422.1 250.5L425.1 253.5L422.1 256.5L419.1 253.5Z" fill="#3553f2" stroke="#7f95ff" stroke-width="0.7"/><path d="M421.1 292.5L424.1 295.5L421.1 298.5L418.1 295.5Z" fill="#3553f2" stroke="#7f95ff" stroke-width="0.7"/><path d="M443.7 144.7L446.7 147.7L443.7 150.7L440.7 147.7Z" fill="#3553f2" stroke="#7f95ff" stroke-width="0.7"/><path d="M443.7 174.8L446.7 177.8L443.7 180.8L440.7 177.8Z" fill="#3553f2" stroke="#7f95ff" stroke-width="0.7"/><path d="M443.7 214.2L446.7 217.2L443.7 220.2L440.7 217.2Z" fill="#3553f2" stroke="#7f95ff" stroke-width="0.7"/><path d="M443.7 223.2L446.7 226.2L443.7 229.2L440.7 226.2Z" fill="#3553f2" stroke="#7f95ff" stroke-width="0.7"/><path d="M441.8 292.5L444.8 295.5L441.8 298.5L438.8 295.5Z" fill="#3553f2" stroke="#7f95ff" stroke-width="0.7"/><path d="M464.6 220.4L467.6 223.4L464.6 226.4L461.6 223.4Z" fill="#3553f2" stroke="#7f95ff" stroke-width="0.7"/><path d="M464.6 237.4L467.6 240.4L464.6 243.4L461.6 240.4Z" fill="#3553f2" stroke="#7f95ff" stroke-width="0.7"/><path d="M463.4 279L466.4 282L463.4 285L460.4 282Z" fill="#3553f2" stroke="#7f95ff" stroke-width="0.7"/><path d="M461 356.2L464 359.2L461 362.2L458 359.2Z" fill="#3553f2" stroke="#7f95ff" stroke-width="0.7"/><path d="M486.2 215L489.2 218L486.2 221L483.2 218Z" fill="#3553f2" stroke="#7f95ff" stroke-width="0.7"/><path d="M484.2 290.6L487.2 293.6L484.2 296.6L481.2 293.6Z" fill="#3553f2" stroke="#7f95ff" stroke-width="0.7"/><path d="M483.3 348.5L486.3 351.5L483.3 354.5L480.3 351.5Z" fill="#3553f2" stroke="#7f95ff" stroke-width="0.7"/><path d="M508.6 148.6L511.6 151.6L508.6 154.6L505.6 151.6Z" fill="#3553f2" stroke="#7f95ff" stroke-width="0.7"/><path d="M508.6 156.3L511.6 159.3L508.6 162.3L505.6 159.3Z" fill="#3553f2" stroke="#7f95ff" stroke-width="0.7"/><path d="M508.6 166L511.6 169L508.6 172L505.6 169Z" fill="#3553f2" stroke="#7f95ff" stroke-width="0.7"/><path d="M508.6 174.5L511.6 177.5L508.6 180.5L505.6 177.5Z" fill="#3553f2" stroke="#7f95ff" stroke-width="0.7"/><path d="M508.6 185L511.6 188L508.6 191L505.6 188Z" fill="#3553f2" stroke="#7f95ff" stroke-width="0.7"/><path d="M508 206.5L511 209.5L508 212.5L505 209.5Z" fill="#3553f2" stroke="#7f95ff" stroke-width="0.7"/><path d="M506.5 239L509.5 242L506.5 245L503.5 242Z" fill="#3553f2" stroke="#7f95ff" stroke-width="0.7"/><path d="M505.5 269L508.5 272L505.5 275L502.5 272Z" fill="#3553f2" stroke="#7f95ff" stroke-width="0.7"/><path d="M504.1 317.6L507.1 320.6L504.1 323.6L501.1 320.6Z" fill="#3553f2" stroke="#7f95ff" stroke-width="0.7"/><path d="M503.6 380.4L506.6 383.4L503.6 386.4L500.6 383.4Z" fill="#3553f2" stroke="#7f95ff" stroke-width="0.7"/><path d="M253 155L512 151.9" stroke="#c2c226" stroke-width="1.15" fill="none"/><path d="M253 163L512 158.6" stroke="#c2c226" stroke-width="1.15" fill="none"/><path d="M253 173.75L512 169" stroke="#c2c226" stroke-width="1.15" fill="none"/><path d="M253 182L512 177.4" stroke="#c2c226" stroke-width="1.15" fill="none"/><path d="M253 194.25L512 188" stroke="#c2c226" stroke-width="1.15" fill="none"/><path d="M253 216.5L512 209.5" stroke="#c2c226" stroke-width="1.15" fill="none"/><path d="M253 250.8L512 242.5" stroke="#c2c226" stroke-width="1.15" fill="none"/><path d="M253 283L512 272.5" stroke="#c2c226" stroke-width="1.15" fill="none"/><path d="M253 333.2L512 321.6" stroke="#c2c226" stroke-width="1.15" fill="none"/><circle cx="253" cy="155" r="2.2" fill="#ee3a2a"/><circle cx="253" cy="163" r="2.2" fill="#ee3a2a"/><circle cx="253" cy="173.75" r="2.2" fill="#ee3a2a"/><circle cx="253" cy="182" r="2.2" fill="#ee3a2a"/><circle cx="253" cy="194.25" r="2.2" fill="#ee3a2a"/><circle cx="253" cy="216.5" r="2.2" fill="#ee3a2a"/><circle cx="253" cy="250.8" r="2.2" fill="#ee3a2a"/><circle cx="253" cy="283" r="2.2" fill="#ee3a2a"/><circle cx="253" cy="333.2" r="2.2" fill="#ee3a2a"/><rect x="243.0" y="136.0" width="11" height="10.5" fill="#ee1c24"/><text x="248.5" y="144.5" font-family="Liberation Sans" font-size="9" fill="#dde" text-anchor="middle">1</text><rect x="265.5" y="135.6" width="11" height="10.5" fill="#1f30f0"/><text x="271" y="144.1" font-family="Liberation Sans" font-size="9" fill="#dde" text-anchor="middle">2</text><rect x="285.5" y="135.2" width="11" height="10.5" fill="#1f30f0"/><text x="291" y="143.7" font-family="Liberation Sans" font-size="9" fill="#dde" text-anchor="middle">3</text><rect x="307.0" y="134.8" width="11" height="10.5" fill="#1f30f0"/><text x="312.5" y="143.2" font-family="Liberation Sans" font-size="9" fill="#dde" text-anchor="middle">4</text><rect x="328.9" y="134.3" width="11" height="10.5" fill="#22b022"/><text x="334.4" y="142.8" font-family="Liberation Sans" font-size="9" fill="#dde" text-anchor="middle">5</text><rect x="349.8" y="133.9" width="11" height="10.5" fill="#1f30f0"/><text x="355.3" y="142.4" font-family="Liberation Sans" font-size="9" fill="#dde" text-anchor="middle">6</text><rect x="370.9" y="133.5" width="11" height="10.5" fill="#1f30f0"/><text x="376.4" y="142.0" font-family="Liberation Sans" font-size="9" fill="#dde" text-anchor="middle">7</text><rect x="392.5" y="133.1" width="11" height="10.5" fill="#1f30f0"/><text x="398" y="141.6" font-family="Liberation Sans" font-size="9" fill="#dde" text-anchor="middle">8</text><rect x="414.1" y="132.7" width="11" height="10.5" fill="#1f30f0"/><text x="419.6" y="141.2" font-family="Liberation Sans" font-size="9" fill="#dde" text-anchor="middle">9</text><rect x="434.2" y="132.2" width="12" height="10.5" fill="#1f30f0"/><text x="440.2" y="140.8" font-family="Liberation Sans" font-size="9" fill="#dde" text-anchor="middle">10</text><rect x="456.3" y="131.8" width="12" height="10.5" fill="#1f30f0"/><text x="462.3" y="140.3" font-family="Liberation Sans" font-size="9" fill="#dde" text-anchor="middle">11</text><rect x="478.0" y="131.4" width="12" height="10.5" fill="#1f30f0"/><text x="484" y="139.9" font-family="Liberation Sans" font-size="9" fill="#dde" text-anchor="middle">12</text><rect x="498.4" y="131.0" width="12" height="10.5" fill="#1f30f0"/><text x="504.4" y="139.5" font-family="Liberation Sans" font-size="9" fill="#dde" text-anchor="middle">13</text></svg>
<div class="a" style="left:235px;top:159.1px;width:24px;height:11px;background:#fff;border:1.5px solid #d0222a"></div>
<div class="t" style="left:236.5px;top:160.16px;font-size:8.8px;color:#222;letter-spacing:-0.6px">10000</div>
<div class="a" style="left:235px;top:170.0px;width:21px;height:11px;background:#fff;border:1.5px solid #d0222a"></div>
<div class="t" style="left:236.5px;top:171.06px;font-size:8.8px;color:#222;letter-spacing:-0.6px">8000</div>
<div class="a" style="left:235px;top:180.0px;width:21px;height:11px;background:#fff;border:1.5px solid #d0222a"></div>
<div class="t" style="left:236.5px;top:181.06px;font-size:8.8px;color:#222;letter-spacing:-0.6px">6000</div>
<div class="a" style="left:235px;top:188.0px;width:21px;height:11px;background:#fff;border:1.5px solid #d0222a"></div>
<div class="t" style="left:236.5px;top:189.06px;font-size:8.8px;color:#222;letter-spacing:-0.6px">5000</div>
<div class="a" style="left:235px;top:199.0px;width:21px;height:11px;background:#fff;border:1.5px solid #d0222a"></div>
<div class="t" style="left:236.5px;top:200.06px;font-size:8.8px;color:#222;letter-spacing:-0.6px">4000</div>
<div class="a" style="left:235px;top:219.0px;width:21px;height:11px;background:#fff;border:1.5px solid #d0222a"></div>
<div class="t" style="left:236.5px;top:220.06px;font-size:8.8px;color:#222;letter-spacing:-0.6px">3000</div>
<div class="a" style="left:235px;top:253.5px;width:21px;height:11px;background:#fff;border:1.5px solid #d0222a"></div>
<div class="t" style="left:236.5px;top:254.56px;font-size:8.8px;color:#222;letter-spacing:-0.6px">2000</div>
<div class="a" style="left:235px;top:285.5px;width:21px;height:11px;background:#fff;border:1.5px solid #d0222a"></div>
<div class="t" style="left:236.5px;top:286.56px;font-size:8.8px;color:#222;letter-spacing:-0.6px">1500</div>
<div class="a" style="left:235px;top:337.0px;width:21px;height:11px;background:#fff;border:1.5px solid #d0222a"></div>
<div class="t" style="left:236.5px;top:338.06px;font-size:8.8px;color:#222;letter-spacing:-0.6px">1000</div>
<div class="a" style="left:231px;top:439px;width:322px;height:69px;background-color:#f6f7f8;background-image:linear-gradient(45deg,#d9dde0 25%,transparent 25%,transparent 75%,#d9dde0 75%),linear-gradient(45deg,#d9dde0 25%,transparent 25%,transparent 75%,#d9dde0 75%);background-size:6px 6px;background-position:0 0,3px 3px"></div>
<svg class="a" style="left:245px;top:430.5px" width="23" height="18"><rect x="0.75" y="0.75" width="21.5" height="16.5" fill="#fbfbfd" stroke="#55595e" stroke-width="1.3"/><circle cx="11.3" cy="3.6" r="1.9" fill="#2a2aa8"/><path d="M11.3 5L4 12.5M11.3 5L18.6 12.5" stroke="#2c34b0" stroke-width="1.2"/><ellipse cx="11.3" cy="11" rx="4.5" ry="2.6" fill="#b8d42a"/><path d="M4 12.5Q11.3 17 18.6 12.5Q11.3 14 4 12.5z" fill="#22229a" stroke="#22229a" stroke-width="1.3"/></svg>
<div class="a" style="left:553px;top:111px;width:15px;height:397px;background:#f3f4f5;border-left:1px solid #d8dcdf"></div>
<div class="a" style="left:553px;top:111px;width:15px;height:14px;background:#fff;border:1px solid #bfc5ca"></div>
<svg class="a" style="left:557px;top:115.5px" width="7" height="4"><path d="M0 4L3.5 0 7 4z" fill="#111"/></svg>
<div class="a" style="left:553px;top:126px;width:14px;height:364px;background:#f7f7f7;border-left:1.5px solid #4c5258;border-bottom:1.5px solid #4c5258;border-right:1px solid #aab0b5"></div>
<svg class="a" style="left:557px;top:498.5px" width="7" height="4"><path d="M0 0L3.5 4 7 0z" fill="#111"/></svg>
<div class="a" style="left:161px;top:508px;width:392px;height:16px;background:#f3f4f5"></div>
<svg class="a" style="left:165.5px;top:512px" width="4" height="7"><path d="M4 0L0 3.5 4 7z" fill="#111"/></svg>
<div class="a" style="left:174px;top:508px;width:359px;height:15px;background:linear-gradient(#f8f9fa,#e9ebed);border-left:1.5px solid #4c5258;border-top:1.5px solid #4c5258;border-right:1px solid #8c9196;border-bottom:1px solid #8c9196"></div>
<svg class="a" style="left:544.5px;top:512px" width="4" height="7"><path d="M0 0L4 3.5 0 7z" fill="#111"/></svg>
<div class="a" style="left:552px;top:508px;width:16px;height:16px;background:#f1f2f3;border:1px solid #9aa1a7"></div>
<svg class="a" style="left:554px;top:510px" width="12" height="12"><circle cx="4.8" cy="4.8" r="3.3" fill="#fff" stroke="#222" stroke-width="1.5"/><path d="M7 7l4 4" stroke="#2a2ab8" stroke-width="2"/></svg>
<div class="a" style="left:576px;top:69px;width:423px;height:463px;background:linear-gradient(#84bde3,#a9d6f3 22px,#b4dcf5 23px,#bde0f6);border:1px solid #56636e;border-radius:4px 4px 0 0"></div>
<svg class="a" style="left:584px;top:77px" width="12" height="12"><rect x="0" y="0" width="12" height="12" fill="#f6f8fa" stroke="#9ab"/><path d="M2 6c1-3 7-3 8 0z" fill="#b8c85a"/><rect x="2" y="6" width="8" height="4" fill="#222"/></svg>
<div class="t" style="left:599.5px;top:79.06px;font-size:8.8px;color:#1a2e48;">Lane 5 [100%]</div>
<div style="position:absolute;top:77px;left:921.4px;width:22px;height:12.5px;border:1px solid #7a9ab5;border-radius:3px;background:linear-gradient(#e3eff9,#c2daee 50%,#adcbe5 51%,#cde3f4)"></div>
<div style="position:absolute;top:77px;left:945.0px;width:22px;height:12.5px;border:1px solid #7a9ab5;border-radius:3px;background:linear-gradient(#e3eff9,#c2daee 50%,#adcbe5 51%,#cde3f4)"></div>
<div style="position:absolute;top:77px;left:968.6px;width:22px;height:12.5px;border:1px solid #6e2a36;border-radius:3px;background:linear-gradient(#eba59e,#d5493d 50%,#c6372b 51%,#df8374)"></div>
<div class="a" style="left:928.0px;top:83px;width:8.5px;height:3.5px;border:1px solid #3f5366;border-radius:1px;background:#eef4f9"></div>
<div class="a" style="left:951.9px;top:80px;width:8.5px;height:6.5px;border:1px solid #3f5366;border-top-width:2px;background:#dfe9f2"></div>
<svg class="a" style="left:975.6px;top:80px" width="10" height="8"><path d="M1.5 1L8.5 7M8.5 1L1.5 7" stroke="#ffffff" stroke-width="2.1"/></svg>
<div class="a" style="left:583px;top:92px;width:408px;height:433px;background:#fff;border-top:1px solid #8d9aa5;border-left:1px solid #8d9aa5"></div>
<svg class="a" style="left:584px;top:93px" width="391" height="242" viewBox="584 93 391 242"><rect x="647" y="132" width="313" height="156" fill="#fff" stroke="#222" stroke-width="1.2"/><path d="M640 288.0H647" stroke="#333" stroke-width="0.9"/><path d="M643 282.2H647" stroke="#333" stroke-width="0.9"/><path d="M643 276.4H647" stroke="#333" stroke-width="0.9"/><path d="M643 270.7H647" stroke="#333" stroke-width="0.9"/><path d="M643 264.9H647" stroke="#333" stroke-width="0.9"/><path d="M640 259.1H647" stroke="#333" stroke-width="0.9"/><path d="M643 253.3H647" stroke="#333" stroke-width="0.9"/><path d="M643 247.5H647" stroke="#333" stroke-width="0.9"/><path d="M643 241.8H647" stroke="#333" stroke-width="0.9"/><path d="M643 236.0H647" stroke="#333" stroke-width="0.9"/><path d="M640 230.2H647" stroke="#333" stroke-width="0.9"/><path d="M643 224.4H647" stroke="#333" stroke-width="0.9"/><path d="M643 218.6H647" stroke="#333" stroke-width="0.9"/><path d="M643 212.9H647" stroke="#333" stroke-width="0.9"/><path d="M643 207.1H647" stroke="#333" stroke-width="0.9"/><path d="M640 201.3H647" stroke="#333" stroke-width="0.9"/><path d="M643 195.5H647" stroke="#333" stroke-width="0.9"/><path d="M643 189.7H647" stroke="#333" stroke-width="0.9"/><path d="M643 184.0H647" stroke="#333" stroke-width="0.9"/><path d="M643 178.2H647" stroke="#333" stroke-width="0.9"/><path d="M640 172.4H647" stroke="#333" stroke-width="0.9"/><path d="M643 166.6H647" stroke="#333" stroke-width="0.9"/><path d="M643 160.8H647" stroke="#333" stroke-width="0.9"/><path d="M643 155.1H647" stroke="#333" stroke-width="0.9"/><path d="M643 149.3H647" stroke="#333" stroke-width="0.9"/><path d="M640 143.5H647" stroke="#333" stroke-width="0.9"/><text x="637" y="291.2" font-family="Liberation Sans" font-size="8.8" fill="#333" stroke="#333" stroke-width="0.25" text-anchor="end">0</text><text x="637" y="262.3" font-family="Liberation Sans" font-size="8.8" fill="#333" stroke="#333" stroke-width="0.25" text-anchor="end">50</text><text x="637" y="233.4" font-family="Liberation Sans" font-size="8.8" fill="#333" stroke="#333" stroke-width="0.25" text-anchor="end">100</text><text x="637" y="204.5" font-family="Liberation Sans" font-size="8.8" fill="#333" stroke="#333" stroke-width="0.25" text-anchor="end">150</text><text x="637" y="175.6" font-family="Liberation Sans" font-size="8.8" fill="#333" stroke="#333" stroke-width="0.25" text-anchor="end">200</text><text x="637" y="146.7" font-family="Liberation Sans" font-size="8.8" fill="#333" stroke="#333" stroke-width="0.25" text-anchor="end">250</text><path d="M657.0 288V294" stroke="#333" stroke-width="0.9"/><path d="M662.7 288V291.5" stroke="#333" stroke-width="0.9"/><path d="M669.0 288V291.5" stroke="#333" stroke-width="0.9"/><path d="M676.2 288V291.5" stroke="#333" stroke-width="0.9"/><path d="M684.4 288V291.5" stroke="#333" stroke-width="0.9"/><path d="M694.2 288V294" stroke="#333" stroke-width="0.9"/><path d="M706.2 288V291.5" stroke="#333" stroke-width="0.9"/><path d="M721.7 288V291.5" stroke="#333" stroke-width="0.9"/><path d="M743.5 288V291.5" stroke="#333" stroke-width="0.9"/><path d="M780.7 288V294" stroke="#333" stroke-width="0.9"/><path d="M786.4 288V291.5" stroke="#333" stroke-width="0.9"/><path d="M792.7 288V291.5" stroke="#333" stroke-width="0.9"/><path d="M799.9 288V291.5" stroke="#333" stroke-width="0.9"/><path d="M808.1 288V291.5" stroke="#333" stroke-width="0.9"/><path d="M817.9 288V294" stroke="#333" stroke-width="0.9"/><path d="M829.9 288V291.5" stroke="#333" stroke-width="0.9"/><path d="M845.4 288V291.5" stroke="#333" stroke-width="0.9"/><path d="M867.2 288V291.5" stroke="#333" stroke-width="0.9"/><path d="M904.4 288V294" stroke="#333" stroke-width="0.9"/><path d="M910.1 288V291.5" stroke="#333" stroke-width="0.9"/><path d="M916.4 288V291.5" stroke="#333" stroke-width="0.9"/><path d="M923.6 288V291.5" stroke="#333" stroke-width="0.9"/><path d="M931.8 288V291.5" stroke="#333" stroke-width="0.9"/><path d="M941.6 288V294" stroke="#333" stroke-width="0.9"/><path d="M953.6 288V291.5" stroke="#333" stroke-width="0.9"/><text x="657.0" y="304.3" font-family="Liberation Sans" font-size="8.8" fill="#333" stroke="#333" stroke-width="0.25" text-anchor="middle">10,000</text><text x="694.2" y="304.3" font-family="Liberation Sans" font-size="8.8" fill="#333" stroke="#333" stroke-width="0.25" text-anchor="middle">5,000</text><text x="780.7" y="304.3" font-family="Liberation Sans" font-size="8.8" fill="#333" stroke="#333" stroke-width="0.25" text-anchor="middle">1,000</text><text x="817.9" y="304.3" font-family="Liberation Sans" font-size="8.8" fill="#333" stroke="#333" stroke-width="0.25" text-anchor="middle">500</text><text x="904.4" y="304.3" font-family="Liberation Sans" font-size="8.8" fill="#333" stroke="#333" stroke-width="0.25" text-anchor="middle">100</text><text x="941.6" y="304.3" font-family="Liberation Sans" font-size="8.8" fill="#333" stroke="#333" stroke-width="0.25" text-anchor="middle">50</text><text x="802.4" y="323" font-family="Liberation Sans" font-size="12.5" font-weight="bold" fill="#111" stroke="#111" stroke-width="0.45" text-anchor="middle">Base Pairs</text><polyline points="650.0,250.5 650.2,250.5 650.5,250.5 650.8,250.5 651.0,250.5 651.2,250.5 651.5,250.5 651.8,250.5 652.0,250.5 652.2,250.5 652.5,250.5 652.8,250.5 653.0,250.5 653.2,250.5 653.5,250.5 653.8,250.5 654.0,250.6 654.2,250.6 654.5,250.6 654.8,250.6 655.0,250.6 655.2,250.6 655.5,250.6 655.8,250.6 656.0,250.6 656.2,250.6 656.5,250.6 656.8,250.6 657.0,250.6 657.2,250.6 657.5,250.6 657.8,250.6 658.0,250.6 658.2,250.6 658.5,250.6 658.8,250.6 659.0,250.6 659.2,250.7 659.5,250.7 659.8,250.7 660.0,250.7 660.2,250.7 660.5,250.7 660.8,250.7 661.0,250.7 661.2,250.7 661.5,250.7 661.8,250.7 662.0,250.7 662.2,250.7 662.5,250.7 662.8,250.7 663.0,250.7 663.2,250.7 663.5,250.8 663.8,250.8 664.0,250.8 664.2,250.8 664.5,250.8 664.8,250.8 665.0,250.8 665.2,250.8 665.5,250.8 665.8,250.8 666.0,250.8 666.2,250.8 666.5,250.8 666.8,250.8 667.0,250.8 667.2,250.8 667.5,250.8 667.8,250.8 668.0,250.9 668.2,250.9 668.5,250.9 668.8,250.9 669.0,250.9 669.2,250.9 669.5,250.9 669.8,250.9 670.0,250.9 670.2,250.9 670.5,250.9 670.8,250.9 671.0,250.9 671.2,250.9 671.5,250.9 671.8,250.9 672.0,250.9 672.2,250.9 672.5,250.9 672.8,250.9 673.0,250.9 673.2,251.0 673.5,251.0 673.8,251.0 674.0,251.0 674.2,251.0 674.5,251.0 674.8,251.0 675.0,251.0 675.2,251.0 675.5,251.0 675.8,251.0 676.0,251.0 676.2,251.0 676.5,251.0 676.8,251.0 677.0,251.0 677.2,251.0 677.5,251.0 677.8,251.0 678.0,251.0 678.2,251.0 678.5,251.0 678.8,251.0 679.0,251.0 679.2,251.0 679.5,251.0 679.8,251.0 680.0,251.0 680.2,251.0 680.5,251.0 680.8,251.0 681.0,251.0 681.2,251.1 681.5,251.1 681.8,251.1 682.0,251.1 682.2,251.2 682.5,251.2 682.8,251.3 683.0,251.3 683.2,251.4 683.5,251.4 683.8,251.5 684.0,251.5 684.2,251.6 684.5,251.7 684.8,251.7 685.0,251.8 685.2,251.9 685.5,252.0 685.8,252.0 686.0,252.1 686.2,252.2 686.5,252.3 686.8,252.4 687.0,252.5 687.2,252.6 687.5,252.7 687.8,252.8 688.0,252.9 688.2,253.0 688.5,253.1 688.8,253.2 689.0,253.3 689.2,253.4 689.5,253.5 689.8,253.6 690.0,253.8 690.2,253.9 690.5,254.0 690.8,254.1 691.0,254.2 691.2,254.3 691.5,254.4 691.8,254.5 692.0,254.6 692.2,254.7 692.5,254.8 692.8,254.9 693.0,255.0 693.2,255.1 693.5,255.2 693.8,255.3 694.0,255.4 694.2,255.5 694.5,255.5 694.8,255.6 695.0,255.7 695.2,255.8 695.5,255.8 695.8,255.9 696.0,256.0 696.2,256.0 696.5,256.1 696.8,256.1 697.0,256.2 697.2,256.2 697.5,256.3 697.8,256.3 698.0,256.4 698.2,256.4 698.5,256.4 698.8,256.4 699.0,256.5 699.2,256.5 699.5,256.5 699.8,256.5 700.0,256.5 700.2,256.5 700.5,256.5 700.8,256.5 701.0,256.6 701.2,256.6 701.5,256.6 701.8,256.7 702.0,256.7 702.2,256.8 702.5,256.8 702.8,256.9 703.0,257.0 703.2,257.0 703.5,257.1 703.8,257.2 704.0,257.3 704.2,257.4 704.5,257.5 704.8,257.6 705.0,257.7 705.2,257.8 705.5,257.9 705.8,258.1 706.0,258.2 706.2,258.3 706.5,258.4 706.8,258.5 707.0,258.7 707.2,258.8 707.5,258.9 707.8,259.0 708.0,259.1 708.2,259.3 708.5,259.4 708.8,259.5 709.0,259.6 709.2,259.7 709.5,259.8 709.8,259.9 710.0,260.0 710.2,260.1 710.5,260.2 710.8,260.3 711.0,260.4 711.2,260.4 711.5,260.5 711.8,260.6 712.0,260.6 712.2,260.7 712.5,260.7 712.8,260.8 713.0,260.8 713.2,260.9 713.5,260.9 713.8,260.9 714.0,260.9 714.2,260.9 714.5,260.9 714.8,260.9 715.0,260.9 715.2,260.8 715.5,260.8 715.8,260.8 716.0,260.7 716.2,260.7 716.5,260.6 716.8,260.5 717.0,260.5 717.2,260.4 717.5,260.3 717.8,260.2 718.0,260.1 718.2,260.0 718.5,259.9 718.8,259.8 719.0,259.7 719.2,259.5 719.5,259.4 719.8,259.3 720.0,259.1 720.2,259.0 720.5,258.9 720.8,258.7 721.0,258.6 721.2,258.4 721.5,258.3 721.8,258.1 722.0,258.0 722.2,257.8 722.5,257.7 722.8,257.5 723.0,257.3 723.2,257.2 723.5,257.0 723.8,256.8 724.0,256.5 724.2,256.3 724.5,256.0 724.8,255.7 725.0,255.3 725.2,254.9 725.5,254.3 725.8,253.7 726.0,253.0 726.2,252.1 726.5,251.1 726.8,249.9 727.0,248.5 727.2,246.8 727.5,244.9 727.8,242.7 728.0,240.1 728.2,237.2 728.5,234.0 728.8,230.4 729.0,226.5 729.2,222.2 729.5,217.5 729.8,212.6 730.0,207.4 730.2,202.0 730.5,196.4 730.8,190.8 731.0,185.1 731.2,179.6 731.5,174.3 731.8,169.3 732.0,164.7 732.2,160.6 732.5,157.1 732.8,154.3 733.0,152.2 733.2,150.9 733.5,150.4 733.8,150.8 734.0,151.9 734.2,153.8 734.5,156.5 734.8,159.9 735.0,163.8 735.2,168.2 735.5,173.1 735.8,178.2 736.0,183.6 736.2,189.0 736.5,194.3 736.8,199.4 737.0,204.1 737.2,208.1 737.5,211.3 737.8,213.3 738.0,214.0 738.2,213.0 738.5,210.3 738.8,206.2 739.0,200.9 739.2,195.2 739.5,189.8 739.8,185.6 740.0,183.4 740.2,183.8 740.5,186.8 740.8,192.3 741.0,199.6 741.2,207.9 741.5,216.4 741.8,224.5 742.0,231.5 742.2,237.2 742.5,241.6 742.8,244.7 743.0,246.9 743.2,248.3 743.5,249.1 743.8,249.6 744.0,249.8 744.2,250.0 744.5,250.0 744.8,250.0 745.0,250.0 745.2,250.0 745.5,250.0 745.8,250.0 746.0,250.0 746.2,250.0 746.5,250.0 746.8,250.0 747.0,250.0 747.2,250.0 747.5,250.0 747.8,250.0 748.0,250.0 748.2,250.1 748.5,250.1 748.8,250.1 749.0,250.1 749.2,250.1 749.5,250.1 749.8,250.1 750.0,250.2 750.2,250.2 750.5,250.2 750.8,250.2 751.0,250.2 751.2,250.3 751.5,250.3 751.8,250.3 752.0,250.3 752.2,250.4 752.5,250.4 752.8,250.4 753.0,250.4 753.2,250.5 753.5,250.5 753.8,250.5 754.0,250.6 754.2,250.6 754.5,250.6 754.8,250.7 755.0,250.7 755.2,250.7 755.5,250.7 755.8,250.8 756.0,250.8 756.2,250.8 756.5,250.9 756.8,250.9 757.0,250.9 757.2,251.0 757.5,251.0 757.8,251.0 758.0,251.0 758.2,251.1 758.5,251.1 758.8,251.1 759.0,251.1 759.2,251.1 759.5,251.1 759.8,251.0 760.0,250.9 760.2,250.7 760.5,250.3 760.8,249.7 761.0,248.7 761.2,247.3 761.5,245.4 761.8,242.6 762.0,239.0 762.2,234.4 762.5,228.6 762.8,221.7 763.0,213.8 763.2,205.1 763.5,196.0 763.8,186.8 764.0,178.2 764.2,170.7 764.5,164.9 764.8,161.3 765.0,160.0 765.2,161.3 765.5,164.9 765.8,170.8 766.0,178.3 766.2,186.9 766.5,196.0 766.8,205.2 767.0,214.0 767.2,221.9 767.5,228.8 767.8,234.6 768.0,239.3 768.2,243.0 768.5,245.7 768.8,247.8 769.0,249.2 769.2,250.2 769.5,250.9 769.8,251.3 770.0,251.6 770.2,251.9 770.5,252.0 770.8,252.1 771.0,252.2 771.2,252.3 771.5,252.3 771.8,252.4 772.0,252.4 772.2,252.5 772.5,252.6 772.8,252.6 773.0,252.7 773.2,252.8 773.5,252.8 773.8,252.9 774.0,253.0 774.2,253.1 774.5,253.1 774.8,253.2 775.0,253.3 775.2,253.4 775.5,253.4 775.8,253.5 776.0,253.6 776.2,253.6 776.5,253.7 776.8,253.8 777.0,253.9 777.2,253.9 777.5,254.0 777.8,254.1 778.0,254.2 778.2,254.2 778.5,254.3 778.8,254.4 779.0,254.5 779.2,254.5 779.5,254.6 779.8,254.7 780.0,254.7 780.2,254.8 780.5,254.9 780.8,254.9 781.0,255.0 781.2,255.0 781.5,255.1 781.8,255.1 782.0,255.2 782.2,255.2 782.5,255.3 782.8,255.3 783.0,255.4 783.2,255.4 783.5,255.5 783.8,255.5 784.0,255.5 784.2,255.6 784.5,255.6 784.8,255.6 785.0,255.7 785.2,255.7 785.5,255.7 785.8,255.7 786.0,255.8 786.2,255.8 786.5,255.8 786.8,255.8 787.0,255.8 787.2,255.8 787.5,255.8 787.8,255.8 788.0,255.8 788.2,255.8 788.5,255.8 788.8,255.8 789.0,255.8 789.2,255.8 789.5,255.8 789.8,255.8 790.0,255.8 790.2,255.8 790.5,255.8 790.8,255.8 791.0,255.8 791.2,255.8 791.5,255.8 791.8,255.8 792.0,255.9 792.2,255.9 792.5,255.9 792.8,255.9 793.0,255.9 793.2,255.9 793.5,255.9 793.8,255.9 794.0,255.9 794.2,255.9 794.5,255.9 794.8,255.9 795.0,256.0 795.2,256.0 795.5,256.0 795.8,256.0 796.0,256.0 796.2,256.0 796.5,256.0 796.8,256.0 797.0,256.0 797.2,256.0 797.5,256.1 797.8,256.1 798.0,256.1 798.2,256.1 798.5,256.1 798.8,256.1 799.0,256.1 799.2,256.1 799.5,256.2 799.8,256.2 800.0,256.2 800.2,256.2 800.5,256.2 800.8,256.1 801.0,256.1 801.2,256.0 801.5,255.9 801.8,255.7 802.0,255.4 802.2,255.0 802.5,254.4 802.8,253.6 803.0,252.5 803.2,251.1 803.5,249.3 803.8,247.1 804.0,244.4 804.2,241.3 804.5,237.7 804.8,233.9 805.0,229.8 805.2,225.7 805.5,221.6 805.8,217.9 806.0,214.7 806.2,212.2 806.5,210.6 806.8,209.9 807.0,210.2 807.2,211.5 807.5,213.7 807.8,216.7 808.0,220.2 808.2,224.2 808.5,228.3 808.8,232.5 809.0,236.5 809.2,240.2 809.5,243.5 809.8,246.4 810.0,248.8 810.2,250.8 810.5,252.4 810.8,253.6 811.0,254.6 811.2,255.3 811.5,255.8 811.8,256.1 812.0,256.4 812.2,256.6 812.5,256.7 812.8,256.8 813.0,256.8 813.2,256.8 813.5,256.9 813.8,256.9 814.0,256.9 814.2,256.9 814.5,256.9 814.8,256.9 815.0,256.9 815.2,256.8 815.5,256.8 815.8,256.7 816.0,256.7 816.2,256.5 816.5,256.4 816.8,256.2 817.0,255.9 817.2,255.6 817.5,255.2 817.8,254.7 818.0,254.0 818.2,253.2 818.5,252.3 818.8,251.2 819.0,249.8 819.2,248.3 819.5,246.5 819.8,244.6 820.0,242.4 820.2,240.0 820.5,237.5 820.8,234.8 821.0,232.0 821.2,229.1 821.5,226.3 821.8,223.6 822.0,221.0 822.2,218.6 822.5,216.5 822.8,214.7 823.0,213.4 823.2,212.5 823.5,212.0 823.8,212.1 824.0,212.6 824.2,213.6 824.5,215.0 824.8,216.8 825.0,218.9 825.2,221.3 825.5,223.9 825.8,226.6 826.0,229.4 826.2,232.1 826.5,234.7 826.8,237.3 827.0,239.6 827.2,241.7 827.5,243.6 827.8,245.2 828.0,246.5 828.2,247.6 828.5,248.5 828.8,249.0 829.0,249.4 829.2,249.6 829.5,249.6 829.8,249.4 830.0,249.1 830.2,248.8 830.5,248.3 830.8,247.8 831.0,247.3 831.2,246.9 831.5,246.4 831.8,246.0 832.0,245.7 832.2,245.4 832.5,245.3 832.8,245.2 833.0,245.3 833.2,245.4 833.5,245.7 833.8,246.0 834.0,246.5 834.2,247.0 834.5,247.6 834.8,248.2 835.0,248.9 835.2,249.6 835.5,250.3 835.8,251.0 836.0,251.7 836.2,252.4 836.5,253.0 836.8,253.6 837.0,254.1 837.2,254.6 837.5,255.1 837.8,255.5 838.0,255.8 838.2,256.1 838.5,256.4 838.8,256.6 839.0,256.8 839.2,256.9 839.5,257.1 839.8,257.2 840.0,257.2 840.2,257.3 840.5,257.4 840.8,257.4 841.0,257.5 841.2,257.5 841.5,257.5 841.8,257.5 842.0,257.6 842.2,257.6 842.5,257.6 842.8,257.6 843.0,257.6 843.2,257.6 843.5,257.6 843.8,257.7 844.0,257.7 844.2,257.7 844.5,257.7 844.8,257.7 845.0,257.7 845.2,257.7 845.5,257.7 845.8,257.7 846.0,257.7 846.2,257.7 846.5,257.8 846.8,257.8 847.0,257.8 847.2,257.8 847.5,257.8 847.8,257.8 848.0,257.8 848.2,257.8 848.5,257.8 848.8,257.8 849.0,257.8 849.2,257.8 849.5,257.8 849.8,257.9 850.0,257.9 850.2,257.9 850.5,257.9 850.8,257.9 851.0,257.9 851.2,257.9 851.5,257.9 851.8,257.9 852.0,257.9 852.2,257.9 852.5,257.9 852.8,257.9 853.0,257.9 853.2,257.9 853.5,257.9 853.8,257.9 854.0,257.9 854.2,258.0 854.5,258.0 854.8,258.0 855.0,258.0 855.2,258.0 855.5,258.0 855.8,258.0 856.0,258.0 856.2,258.0 856.5,258.0 856.8,258.0 857.0,258.0 857.2,258.0 857.5,258.0 857.8,258.0 858.0,258.0 858.2,258.0 858.5,258.0 858.8,258.0 859.0,258.0 859.2,258.0 859.5,258.0 859.8,258.0 860.0,258.0 860.2,258.0 860.5,258.0 860.8,258.0 861.0,258.0 861.2,258.0 861.5,258.0 861.8,258.0 862.0,258.0 862.2,258.0 862.5,258.0 862.8,258.0 863.0,258.0 863.2,258.0 863.5,258.0 863.8,258.0 864.0,258.0 864.2,258.0 864.5,258.0 864.8,258.0 865.0,258.0 865.2,258.0 865.5,258.0 865.8,258.0 866.0,258.0 866.2,258.0 866.5,258.0 866.8,258.0 867.0,258.0 867.2,258.0 867.5,258.0 867.8,258.0 868.0,258.0 868.2,258.0 868.5,258.0 868.8,258.1 869.0,258.1 869.2,258.1 869.5,258.1 869.8,258.1 870.0,258.1 870.2,258.1 870.5,258.1 870.8,258.1 871.0,258.1 871.2,258.1 871.5,258.1 871.8,258.1 872.0,258.1 872.2,258.1 872.5,258.1 872.8,258.1 873.0,258.1 873.2,258.1 873.5,258.1 873.8,258.1 874.0,258.1 874.2,258.1 874.5,258.1 874.8,258.1 875.0,258.1 875.2,258.2 875.5,258.2 875.8,258.2 876.0,258.2 876.2,258.2 876.5,258.2 876.8,258.2 877.0,258.2 877.2,258.2 877.5,258.2 877.8,258.2 878.0,258.2 878.2,258.2 878.5,258.2 878.8,258.2 879.0,258.2 879.2,258.2 879.5,258.2 879.8,258.2 880.0,258.2 880.2,258.3 880.5,258.3 880.8,258.3 881.0,258.3 881.2,258.3 881.5,258.3 881.8,258.3 882.0,258.3 882.2,258.3 882.5,258.3 882.8,258.3 883.0,258.3 883.2,258.3 883.5,258.3 883.8,258.3 884.0,258.3 884.2,258.4 884.5,258.4 884.8,258.4 885.0,258.4 885.2,258.4 885.5,258.4 885.8,258.4 886.0,258.4 886.2,258.4 886.5,258.4 886.8,258.4 887.0,258.4 887.2,258.4 887.5,258.4 887.8,258.4 888.0,258.5 888.2,258.5 888.5,258.5 888.8,258.5 889.0,258.5 889.2,258.5 889.5,258.5 889.8,258.5 890.0,258.5 890.2,258.5 890.5,258.5 890.8,258.5 891.0,258.5 891.2,258.5 891.5,258.6 891.8,258.6 892.0,258.6 892.2,258.6 892.5,258.6 892.8,258.6 893.0,258.6 893.2,258.6 893.5,258.6 893.8,258.6 894.0,258.6 894.2,258.6 894.5,258.6 894.8,258.6 895.0,258.7 895.2,258.7 895.5,258.7 895.8,258.7 896.0,258.7 896.2,258.7 896.5,258.7 896.8,258.7 897.0,258.7 897.2,258.7 897.5,258.7 897.8,258.7 898.0,258.7 898.2,258.7 898.5,258.8 898.8,258.8 899.0,258.8 899.2,258.8 899.5,258.8 899.8,258.8 900.0,258.8 900.2,258.8 900.5,258.8 900.8,258.8 901.0,258.8 901.2,258.8 901.5,258.8 901.8,258.8 902.0,258.9 902.2,258.9 902.5,258.9 902.8,258.9 903.0,258.9 903.2,258.9 903.5,258.9 903.8,258.9 904.0,258.9 904.2,258.9 904.5,258.9 904.8,258.9 905.0,258.9 905.2,258.9 905.5,258.9 905.8,259.0 906.0,259.0 906.2,259.0 906.5,259.0 906.8,259.0 907.0,259.0 907.2,259.0 907.5,259.0 907.8,259.0 908.0,259.0 908.2,259.0 908.5,259.0 908.8,259.0 909.0,259.0 909.2,259.0 909.5,259.0 909.8,259.1 910.0,259.1 910.2,259.1 910.5,259.1 910.8,259.1 911.0,259.1 911.2,259.1 911.5,259.1 911.8,259.1 912.0,259.1 912.2,259.1 912.5,259.1 912.8,259.1 913.0,259.1 913.2,259.1 913.5,259.1 913.8,259.1 914.0,259.1 914.2,259.1 914.5,259.2 914.8,259.2 915.0,259.2 915.2,259.2 915.5,259.2 915.8,259.2 916.0,259.2 916.2,259.2 916.5,259.2 916.8,259.2 917.0,259.2 917.2,259.2 917.5,259.2 917.8,259.2 918.0,259.2 918.2,259.2 918.5,259.2 918.8,259.2 919.0,259.2 919.2,259.2 919.5,259.2 919.8,259.2 920.0,259.2 920.2,259.2 920.5,259.2 920.8,259.2 921.0,259.2 921.2,259.3 921.5,259.3 921.8,259.3 922.0,259.3 922.2,259.3 922.5,259.3 922.8,259.3 923.0,259.3 923.2,259.3 923.5,259.3 923.8,259.3 924.0,259.3 924.2,259.3 924.5,259.3 924.8,259.3 925.0,259.3 925.2,259.3 925.5,259.3 925.8,259.3 926.0,259.3 926.2,259.3 926.5,259.3 926.8,259.3 927.0,259.3 927.2,259.3 927.5,259.3 927.8,259.3 928.0,259.3 928.2,259.3 928.5,259.3 928.8,259.3 929.0,259.3 929.2,259.3 929.5,259.3 929.8,259.3 930.0,259.3" fill="none" stroke="#37b237" stroke-width="1.1"/><polyline points="650.0,250.5 650.2,250.5 650.5,250.5 650.8,250.5 651.0,250.5 651.2,250.5 651.5,250.5 651.8,250.5 652.0,250.5 652.2,250.5 652.5,250.5 652.8,250.5 653.0,250.5 653.2,250.5 653.5,250.5 653.8,250.5 654.0,250.6 654.2,250.6 654.5,250.6 654.8,250.6 655.0,250.6 655.2,250.6 655.5,250.6 655.8,250.6 656.0,250.6 656.2,250.6 656.5,250.6 656.8,250.6 657.0,250.6 657.2,250.6 657.5,250.6 657.8,250.6 658.0,250.6 658.2,250.6 658.5,250.6 658.8,250.6 659.0,250.6 659.2,250.7 659.5,250.7 659.8,250.7 660.0,250.7 660.2,250.7 660.5,250.7 660.8,250.7 661.0,250.7 661.2,250.7 661.5,250.7 661.8,250.7 662.0,250.7 662.2,250.7 662.5,250.7 662.8,250.7 663.0,250.7 663.2,250.7 663.5,250.8 663.8,250.8 664.0,250.8 664.2,250.8 664.5,250.8 664.8,250.8 665.0,250.8 665.2,250.8 665.5,250.8 665.8,250.8 666.0,250.8 666.2,250.8 666.5,250.8 666.8,250.8 667.0,250.8 667.2,250.8 667.5,250.8 667.8,250.8 668.0,250.9 668.2,250.9 668.5,250.9 668.8,250.9 669.0,250.9 669.2,250.9 669.5,250.9 669.8,250.9 670.0,250.9 670.2,250.9 670.5,250.9 670.8,250.9 671.0,250.9 671.2,250.9 671.5,250.9 671.8,250.9 672.0,250.9 672.2,250.9 672.5,250.9 672.8,250.9 673.0,250.9 673.2,251.0 673.5,251.0 673.8,251.0 674.0,251.0 674.2,251.0 674.5,251.0 674.8,251.0 675.0,251.0 675.2,251.0 675.5,251.0 675.8,251.0 676.0,251.0 676.2,251.0 676.5,251.0 676.8,251.0 677.0,251.0 677.2,251.0 677.5,251.0 677.8,251.0 678.0,251.0 678.2,251.0 678.5,251.0 678.8,251.0 679.0,251.0 679.2,251.0 679.5,251.0 679.8,251.0 680.0,251.0 680.2,251.0 680.5,251.0 680.8,251.0 681.0,251.0 681.2,251.1 681.5,251.1 681.8,251.1 682.0,251.1 682.2,251.2 682.5,251.2 682.8,251.3 683.0,251.3 683.2,251.4 683.5,251.4 683.8,251.5 684.0,251.5 684.2,251.6 684.5,251.7 684.8,251.7 685.0,251.8 685.2,251.9 685.5,252.0 685.8,252.0 686.0,252.1 686.2,252.2 686.5,252.3 686.8,252.4 687.0,252.5 687.2,252.6 687.5,252.7 687.8,252.8 688.0,252.9 688.2,253.0 688.5,253.1 688.8,253.2 689.0,253.3 689.2,253.4 689.5,253.5 689.8,253.6 690.0,253.8 690.2,253.9 690.5,254.0 690.8,254.1 691.0,254.2 691.2,254.3 691.5,254.4 691.8,254.5 692.0,254.6 692.2,254.7 692.5,254.8 692.8,254.9 693.0,255.0 693.2,255.1 693.5,255.2 693.8,255.3 694.0,255.4 694.2,255.5 694.5,255.5 694.8,255.6 695.0,255.7 695.2,255.8 695.5,255.8 695.8,255.9 696.0,256.0 696.2,256.0 696.5,256.1 696.8,256.1 697.0,256.2 697.2,256.2 697.5,256.3 697.8,256.3 698.0,256.4 698.2,256.4 698.5,256.4 698.8,256.4 699.0,256.5 699.2,256.5 699.5,256.5 699.8,256.5 700.0,256.5 700.2,256.5 700.5,256.5 700.8,256.5 701.0,256.6 701.2,256.6 701.5,256.6 701.8,256.7 702.0,256.7 702.2,256.8 702.5,256.8 702.8,256.9 703.0,257.0 703.2,257.0 703.5,257.1 703.8,257.2 704.0,257.3 704.2,257.4 704.5,257.5 704.8,257.6 705.0,257.7 705.2,257.8 705.5,257.9 705.8,258.1 706.0,258.2 706.2,258.3 706.5,258.4 706.8,258.5 707.0,258.7 707.2,258.8 707.5,258.9 707.8,259.0 708.0,259.1 708.2,259.3 708.5,259.4 708.8,259.5 709.0,259.6 709.2,259.7 709.5,259.8 709.8,259.9 710.0,260.0 710.2,260.1 710.5,260.2 710.8,260.3 711.0,260.4 711.2,260.4 711.5,260.5 711.8,260.6 712.0,260.6 712.2,260.7 712.5,260.7 712.8,260.8 713.0,260.8 713.2,260.9 713.5,260.9 713.8,260.9 714.0,260.9 714.2,260.9 714.5,260.9 714.8,260.9 715.0,260.9 715.2,260.8 715.5,260.8 715.8,260.8 716.0,260.7 716.2,260.7 716.5,260.6 716.8,260.5 717.0,260.5 717.2,260.4 717.5,260.3 717.8,260.2 718.0,260.1 718.2,260.0 718.5,259.9 718.8,259.8 719.0,259.7 719.2,259.5 719.5,259.4 719.8,259.3 720.0,259.1 720.2,259.0 720.5,258.9 720.8,258.7 721.0,258.6 721.2,258.4 721.5,258.3 721.8,258.2 722.0,258.0 722.2,257.9 722.5,257.7 722.8,257.6 723.0,257.4 723.2,257.3 723.5,257.1 723.8,257.0 724.0,256.9 724.2,256.7 724.5,256.6 724.8,256.5 725.0,256.3 725.2,256.2 725.5,256.1 725.8,256.0 726.0,255.9 726.2,255.8 726.5,255.7 726.8,255.6 727.0,255.5 727.2,255.4 727.5,255.4 727.8,255.3 728.0,255.2 728.2,255.2 728.5,255.1 728.8,255.1 729.0,255.1 729.2,255.0 729.5,255.0 729.8,255.0 730.0,255.0 730.2,255.0 730.5,255.0 730.8,255.0 731.0,255.0 731.2,254.9 731.5,254.9 731.8,254.9 732.0,254.8 732.2,254.8 732.5,254.7 732.8,254.6 733.0,254.6 733.2,254.5 733.5,254.4 733.8,254.4 734.0,254.3 734.2,254.2 734.5,254.1 734.8,254.0 735.0,253.9 735.2,253.8 735.5,253.7 735.8,253.6 736.0,253.5 736.2,253.3 736.5,253.2 736.8,253.1 737.0,253.0 737.2,252.9 737.5,252.7 737.8,252.6 738.0,252.5 738.2,252.4 738.5,252.3 738.8,252.1 739.0,252.0 739.2,251.9 739.5,251.8 739.8,251.7 740.0,251.5 740.2,251.4 740.5,251.3 740.8,251.2 741.0,251.1 741.2,251.0 741.5,250.9 741.8,250.8 742.0,250.7 742.2,250.6 742.5,250.6 742.8,250.5 743.0,250.4 743.2,250.4 743.5,250.3 743.8,250.2 744.0,250.2 744.2,250.1 744.5,250.1 744.8,250.1 745.0,250.0 745.2,250.0 745.5,250.0 745.8,250.0 746.0,250.0 746.2,250.0 746.5,250.0 746.8,250.0 747.0,250.0 747.2,250.0 747.5,250.0 747.8,250.0 748.0,250.0 748.2,250.1 748.5,250.1 748.8,250.1 749.0,250.1 749.2,250.1 749.5,250.1 749.8,250.1 750.0,250.2 750.2,250.2 750.5,250.2 750.8,250.2 751.0,250.2 751.2,250.3 751.5,250.3 751.8,250.3 752.0,250.3 752.2,250.4 752.5,250.4 752.8,250.4 753.0,250.4 753.2,250.5 753.5,250.5 753.8,250.5 754.0,250.6 754.2,250.6 754.5,250.6 754.8,250.7 755.0,250.7 755.2,250.7 755.5,250.8 755.8,250.8 756.0,250.8 756.2,250.8 756.5,250.9 756.8,250.9 757.0,250.9 757.2,251.0 757.5,251.0 757.8,251.0 758.0,251.1 758.2,251.1 758.5,251.1 758.8,251.1 759.0,251.2 759.2,251.2 759.5,251.2 759.8,251.2 760.0,251.3 760.2,251.3 760.5,251.3 760.8,251.3 761.0,251.3 761.2,251.4 761.5,251.4 761.8,251.4 762.0,251.4 762.2,251.4 762.5,251.4 762.8,251.4 763.0,251.5 763.2,251.5 763.5,251.5 763.8,251.5 764.0,251.5 764.2,251.5 764.5,251.5 764.8,251.5 765.0,251.5 765.2,251.5 765.5,251.5 765.8,251.5 766.0,251.5 766.2,251.5 766.5,251.5 766.8,251.6 767.0,251.6 767.2,251.6 767.5,251.6 767.8,251.7 768.0,251.7 768.2,251.7 768.5,251.8 768.8,251.8 769.0,251.8 769.2,251.9 769.5,251.9 769.8,252.0 770.0,252.0 770.2,252.1 770.5,252.1 770.8,252.2 771.0,252.2 771.2,252.3 771.5,252.3 771.8,252.4 772.0,252.4 772.2,252.5 772.5,252.6 772.8,252.6 773.0,252.7 773.2,252.8 773.5,252.8 773.8,252.9 774.0,253.0 774.2,253.1 774.5,253.1 774.8,253.2 775.0,253.3 775.2,253.4 775.5,253.4 775.8,253.5 776.0,253.6 776.2,253.7 776.5,253.7 776.8,253.8 777.0,253.9 777.2,253.9 777.5,254.0 777.8,254.1 778.0,254.2 778.2,254.2 778.5,254.3 778.8,254.4 779.0,254.5 779.2,254.5 779.5,254.6 779.8,254.7 780.0,254.7 780.2,254.8 780.5,254.9 780.8,254.9 781.0,255.0 781.2,255.0 781.5,255.1 781.8,255.1 782.0,255.2 782.2,255.2 782.5,255.3 782.8,255.3 783.0,255.4 783.2,255.4 783.5,255.5 783.8,255.5 784.0,255.5 784.2,255.6 784.5,255.6 784.8,255.6 785.0,255.7 785.2,255.7 785.5,255.7 785.8,255.7 786.0,255.8 786.2,255.8 786.5,255.8 786.8,255.8 787.0,255.8 787.2,255.8 787.5,255.8 787.8,255.8 788.0,255.8 788.2,255.8 788.5,255.8 788.8,255.8 789.0,255.8 789.2,255.8 789.5,255.8 789.8,255.8 790.0,255.8 790.2,255.8 790.5,255.8 790.8,255.8 791.0,255.8 791.2,255.8 791.5,255.8 791.8,255.8 792.0,255.9 792.2,255.9 792.5,255.9 792.8,255.9 793.0,255.9 793.2,255.9 793.5,255.9 793.8,255.9 794.0,255.9 794.2,255.9 794.5,255.9 794.8,255.9 795.0,256.0 795.2,256.0 795.5,256.0 795.8,256.0 796.0,256.0 796.2,256.0 796.5,256.0 796.8,256.0 797.0,256.0 797.2,256.0 797.5,256.1 797.8,256.1 798.0,256.1 798.2,256.1 798.5,256.1 798.8,256.1 799.0,256.1 799.2,256.1 799.5,256.2 799.8,256.2 800.0,256.2 800.2,256.2 800.5,256.2 800.8,256.2 801.0,256.2 801.2,256.3 801.5,256.3 801.8,256.3 802.0,256.3 802.2,256.3 802.5,256.3 802.8,256.3 803.0,256.4 803.2,256.4 803.5,256.4 803.8,256.4 804.0,256.4 804.2,256.4 804.5,256.4 804.8,256.5 805.0,256.5 805.2,256.5 805.5,256.5 805.8,256.5 806.0,256.5 806.2,256.5 806.5,256.6 806.8,256.6 807.0,256.6 807.2,256.6 807.5,256.6 807.8,256.6 808.0,256.6 808.2,256.7 808.5,256.7 808.8,256.7 809.0,256.7 809.2,256.7 809.5,256.7 809.8,256.7 810.0,256.7 810.2,256.8 810.5,256.8 810.8,256.8 811.0,256.8 811.2,256.8 811.5,256.8 811.8,256.8 812.0,256.8 812.2,256.8 812.5,256.8 812.8,256.9 813.0,256.9 813.2,256.9 813.5,256.9 813.8,256.9 814.0,256.9 814.2,256.9 814.5,256.9 814.8,256.9 815.0,256.9 815.2,256.9 815.5,256.9 815.8,257.0 816.0,257.0 816.2,257.0 816.5,257.0 816.8,257.0 817.0,257.0 817.2,257.0 817.5,257.0 817.8,257.0 818.0,257.0 818.2,257.0 818.5,257.0 818.8,257.0 819.0,257.0 819.2,257.0 819.5,257.0 819.8,257.0 820.0,257.0 820.2,257.0 820.5,257.0 820.8,257.0 821.0,257.0 821.2,257.0 821.5,257.0 821.8,257.0 822.0,257.0 822.2,257.0 822.5,257.0 822.8,257.0 823.0,257.0 823.2,257.0 823.5,257.0 823.8,257.0 824.0,257.0 824.2,257.0 824.5,257.0 824.8,257.0 825.0,257.0 825.2,257.0 825.5,257.0 825.8,257.1 826.0,257.1 826.2,257.1 826.5,257.1 826.8,257.1 827.0,257.1 827.2,257.1 827.5,257.1 827.8,257.1 828.0,257.1 828.2,257.1 828.5,257.1 828.8,257.1 829.0,257.1 829.2,257.1 829.5,257.1 829.8,257.1 830.0,257.1 830.2,257.2 830.5,257.2 830.8,257.2 831.0,257.2 831.2,257.2 831.5,257.2 831.8,257.2 832.0,257.2 832.2,257.2 832.5,257.2 832.8,257.2 833.0,257.2 833.2,257.3 833.5,257.3 833.8,257.3 834.0,257.3 834.2,257.3 834.5,257.3 834.8,257.3 835.0,257.3 835.2,257.3 835.5,257.3 835.8,257.3 836.0,257.4 836.2,257.4 836.5,257.4 836.8,257.4 837.0,257.4 837.2,257.4 837.5,257.4 837.8,257.4 838.0,257.4 838.2,257.4 838.5,257.4 838.8,257.5 839.0,257.5 839.2,257.5 839.5,257.5 839.8,257.5 840.0,257.5 840.2,257.5 840.5,257.5 840.8,257.5 841.0,257.5 841.2,257.6 841.5,257.6 841.8,257.6 842.0,257.6 842.2,257.6 842.5,257.6 842.8,257.6 843.0,257.6 843.2,257.6 843.5,257.6 843.8,257.7 844.0,257.7 844.2,257.7 844.5,257.7 844.8,257.7 845.0,257.7 845.2,257.7 845.5,257.7 845.8,257.7 846.0,257.7 846.2,257.7 846.5,257.8 846.8,257.8 847.0,257.8 847.2,257.8 847.5,257.8 847.8,257.8 848.0,257.8 848.2,257.8 848.5,257.8 848.8,257.8 849.0,257.8 849.2,257.8 849.5,257.8 849.8,257.9 850.0,257.9 850.2,257.9 850.5,257.9 850.8,257.9 851.0,257.9 851.2,257.9 851.5,257.9 851.8,257.9 852.0,257.9 852.2,257.9 852.5,257.9 852.8,257.9 853.0,257.9 853.2,257.9 853.5,257.9 853.8,257.9 854.0,257.9 854.2,258.0 854.5,258.0 854.8,258.0 855.0,258.0 855.2,258.0 855.5,258.0 855.8,258.0 856.0,258.0 856.2,258.0 856.5,258.0 856.8,258.0 857.0,258.0 857.2,258.0 857.5,258.0 857.8,258.0 858.0,258.0 858.2,258.0 858.5,258.0 858.8,258.0 859.0,258.0 859.2,258.0 859.5,258.0 859.8,258.0 860.0,258.0 860.2,258.0 860.5,258.0 860.8,258.0 861.0,258.0 861.2,258.0 861.5,258.0 861.8,258.0 862.0,258.0 862.2,258.0 862.5,258.0 862.8,258.0 863.0,258.0 863.2,258.0 863.5,258.0 863.8,258.0 864.0,258.0 864.2,258.0 864.5,258.0 864.8,258.0 865.0,258.0 865.2,258.0 865.5,258.0 865.8,258.0 866.0,258.0 866.2,258.0 866.5,258.0 866.8,258.0 867.0,258.0 867.2,258.0 867.5,258.0 867.8,258.0 868.0,258.0 868.2,258.0 868.5,258.0 868.8,258.1 869.0,258.1 869.2,258.1 869.5,258.1 869.8,258.1 870.0,258.1 870.2,258.1 870.5,258.1 870.8,258.1 871.0,258.1 871.2,258.1 871.5,258.1 871.8,258.1 872.0,258.1 872.2,258.1 872.5,258.1 872.8,258.1 873.0,258.1 873.2,258.1 873.5,258.1 873.8,258.1 874.0,258.1 874.2,258.1 874.5,258.1 874.8,258.1 875.0,258.1 875.2,258.2 875.5,258.2 875.8,258.2 876.0,258.2 876.2,258.2 876.5,258.2 876.8,258.2 877.0,258.2 877.2,258.2 877.5,258.2 877.8,258.2 878.0,258.2 878.2,258.2 878.5,258.2 878.8,258.2 879.0,258.2 879.2,258.2 879.5,258.2 879.8,258.2 880.0,258.2 880.2,258.3 880.5,258.3 880.8,258.3 881.0,258.3 881.2,258.3 881.5,258.3 881.8,258.3 882.0,258.3 882.2,258.3 882.5,258.3 882.8,258.3 883.0,258.3 883.2,258.3 883.5,258.3 883.8,258.3 884.0,258.3 884.2,258.4 884.5,258.4 884.8,258.4 885.0,258.4 885.2,258.4 885.5,258.4 885.8,258.4 886.0,258.4 886.2,258.4 886.5,258.4 886.8,258.4 887.0,258.4 887.2,258.4 887.5,258.4 887.8,258.4 888.0,258.5 888.2,258.5 888.5,258.5 888.8,258.5 889.0,258.5 889.2,258.5 889.5,258.5 889.8,258.5 890.0,258.5 890.2,258.5 890.5,258.5 890.8,258.5 891.0,258.5 891.2,258.5 891.5,258.6 891.8,258.6 892.0,258.6 892.2,258.6 892.5,258.6 892.8,258.6 893.0,258.6 893.2,258.6 893.5,258.6 893.8,258.6 894.0,258.6 894.2,258.6 894.5,258.6 894.8,258.6 895.0,258.7 895.2,258.7 895.5,258.7 895.8,258.7 896.0,258.7 896.2,258.7 896.5,258.7 896.8,258.7 897.0,258.7 897.2,258.7 897.5,258.7 897.8,258.7 898.0,258.7 898.2,258.7 898.5,258.8 898.8,258.8 899.0,258.8 899.2,258.8 899.5,258.8 899.8,258.8 900.0,258.8 900.2,258.8 900.5,258.8 900.8,258.8 901.0,258.8 901.2,258.8 901.5,258.8 901.8,258.8 902.0,258.9 902.2,258.9 902.5,258.9 902.8,258.9 903.0,258.9 903.2,258.9 903.5,258.9 903.8,258.9 904.0,258.9 904.2,258.9 904.5,258.9 904.8,258.9 905.0,258.9 905.2,258.9 905.5,258.9 905.8,259.0 906.0,259.0 906.2,259.0 906.5,259.0 906.8,259.0 907.0,259.0 907.2,259.0 907.5,259.0 907.8,259.0 908.0,259.0 908.2,259.0 908.5,259.0 908.8,259.0 909.0,259.0 909.2,259.0 909.5,259.0 909.8,259.1 910.0,259.1 910.2,259.1 910.5,259.1 910.8,259.1 911.0,259.1 911.2,259.1 911.5,259.1 911.8,259.1 912.0,259.1 912.2,259.1 912.5,259.1 912.8,259.1 913.0,259.1 913.2,259.1 913.5,259.1 913.8,259.1 914.0,259.1 914.2,259.1 914.5,259.2 914.8,259.2 915.0,259.2 915.2,259.2 915.5,259.2 915.8,259.2 916.0,259.2 916.2,259.2 916.5,259.2 916.8,259.2 917.0,259.2 917.2,259.2 917.5,259.2 917.8,259.2 918.0,259.2 918.2,259.2 918.5,259.2 918.8,259.2 919.0,259.2 919.2,259.2 919.5,259.2 919.8,259.2 920.0,259.2 920.2,259.2 920.5,259.2 920.8,259.2 921.0,259.2 921.2,259.3 921.5,259.3 921.8,259.3 922.0,259.3 922.2,259.3 922.5,259.3 922.8,259.3 923.0,259.3 923.2,259.3 923.5,259.3 923.8,259.3 924.0,259.3 924.2,259.3 924.5,259.3 924.8,259.3 925.0,259.3 925.2,259.3 925.5,259.3 925.8,259.3 926.0,259.3 926.2,259.3 926.5,259.3 926.8,259.3 927.0,259.3 927.2,259.3 927.5,259.3 927.8,259.3 928.0,259.3 928.2,259.3 928.5,259.3 928.8,259.3 929.0,259.3 929.2,259.3 929.5,259.3 929.8,259.3 930.0,259.3" fill="none" stroke="#8a45e0" stroke-width="1.4"/><path d="M722.8 257.5V288" stroke="#111" stroke-width="1" stroke-dasharray="2,2"/><path d="M738 252.5V288" stroke="#111" stroke-width="1" stroke-dasharray="2,2"/><path d="M745.7 250.0V288" stroke="#111" stroke-width="1" stroke-dasharray="2,2"/><path d="M760.5 251.3V288" stroke="#111" stroke-width="1" stroke-dasharray="2,2"/><path d="M769.1 251.8V288" stroke="#111" stroke-width="1" stroke-dasharray="2,2"/><path d="M799.2 256.1V288" stroke="#111" stroke-width="1" stroke-dasharray="2,2"/><path d="M812.4 256.8V288" stroke="#111" stroke-width="1" stroke-dasharray="2,2"/><path d="M830 257.1V288" stroke="#111" stroke-width="1" stroke-dasharray="2,2"/><path d="M848.6 257.8V288" stroke="#111" stroke-width="1" stroke-dasharray="2,2"/><path d="M733.5 123.5V136" stroke="#2b3fe0" stroke-width="1"/><path d="M730.5 135L736.5 135L733.5 141z" fill="#2b3fe0"/><rect x="727.5" y="113.5" width="13" height="10.5" fill="#fff" stroke="#2b3fe0" stroke-width="1"/><text x="734" y="122" font-family="Liberation Sans" font-size="9" fill="#111" text-anchor="middle">1</text><path d="M740 109.0V168.3" stroke="#2b3fe0" stroke-width="1"/><path d="M737 167.3L743 167.3L740 173.3z" fill="#2b3fe0"/><rect x="734.0" y="99.0" width="13" height="10.5" fill="#fff" stroke="#2b3fe0" stroke-width="1"/><text x="740.5" y="107.5" font-family="Liberation Sans" font-size="9" fill="#111" text-anchor="middle">2</text><path d="M765 123.0V143.6" stroke="#2b3fe0" stroke-width="1"/><path d="M762 142.6L768 142.6L765 148.6z" fill="#2b3fe0"/><rect x="759.0" y="113.0" width="13" height="10.5" fill="#fff" stroke="#2b3fe0" stroke-width="1"/><text x="765.5" y="121.5" font-family="Liberation Sans" font-size="9" fill="#111" text-anchor="middle">3</text><path d="M806.5 108.2V194.7" stroke="#2b3fe0" stroke-width="1"/><path d="M803.5 193.7L809.5 193.7L806.5 199.7z" fill="#2b3fe0"/><rect x="800.5" y="98.2" width="13" height="10.5" fill="#fff" stroke="#2b3fe0" stroke-width="1"/><text x="807" y="106.7" font-family="Liberation Sans" font-size="9" fill="#111" text-anchor="middle">4</text><path d="M823.3 122.5V197.8" stroke="#2b3fe0" stroke-width="1"/><path d="M820.3 196.8L826.3 196.8L823.3 202.8z" fill="#2b3fe0"/><rect x="817.2" y="112.5" width="13" height="10.5" fill="#fff" stroke="#2b3fe0" stroke-width="1"/><text x="823.7" y="121" font-family="Liberation Sans" font-size="9" fill="#111" text-anchor="middle">5</text><path d="M833.8 108.2V231.8" stroke="#2b3fe0" stroke-width="1"/><path d="M830.8 230.8L836.8 230.8L833.8 236.8z" fill="#2b3fe0"/><rect x="827.5" y="98.2" width="13" height="10.5" fill="#fff" stroke="#2b3fe0" stroke-width="1"/><text x="834" y="106.7" font-family="Liberation Sans" font-size="9" fill="#111" text-anchor="middle">6</text></svg>
<div class="a" style="left:975px;top:93px;width:16px;height:242px;background:#f3f4f5"></div>
<div class="a" style="left:975px;top:93px;width:16px;height:12px;background:#fff;border:1px solid #c4c9ce"></div>
<svg class="a" style="left:980px;top:96.5px" width="7" height="4"><path d="M0 4L3.5 0 7 4z" fill="#111"/></svg>
<div class="a" style="left:975px;top:106px;width:15px;height:211px;background:#f7f7f7;border-left:1.5px solid #4c5258;border-bottom:1.5px solid #4c5258;border-right:1px solid #aab0b5"></div>
<svg class="a" style="left:980px;top:326px" width="7" height="4"><path d="M0 0L3.5 4 7 0z" fill="#111"/></svg>
<div class="a" style="left:584px;top:335px;width:391px;height:15px;background:#f3f4f5"></div>
<svg class="a" style="left:587.5px;top:339px" width="4" height="7"><path d="M4 0L0 3.5 4 7z" fill="#111"/></svg>
<div class="a" style="left:597px;top:335px;width:364px;height:15px;background:linear-gradient(#f8f9fa,#e9ebed);border-left:1.5px solid #4c5258;border-top:1.5px solid #4c5258;border-right:1px solid #8c9196;border-bottom:1px solid #8c9196"></div>
<svg class="a" style="left:966.5px;top:339px" width="4" height="7"><path d="M0 0L4 3.5 0 7z" fill="#111"/></svg>
<div class="a" style="left:975px;top:335px;width:16px;height:16px;background:#f1f2f3;border:1px solid #9aa1a7"></div>
<svg class="a" style="left:977px;top:337px" width="12" height="12"><rect x="1" y="1" width="10" height="10" fill="#fff" stroke="#3535c8" stroke-width="1.5"/><rect x="2" y="2" width="5" height="4" fill="#7d8ad8"/><path d="M5 8l4-3" stroke="#3535c8"/></svg>
<div class="a" style="left:584px;top:351px;width:407px;height:4px;background:#fff"></div>
<div class="a" style="left:584px;top:354.6px;width:407px;height:1.2px;background:#a3abb2"></div>
<svg class="a" style="left:630px;top:370px" width="330" height="70" viewBox="630 370 330 70"><defs><linearGradient id="sg" x1="0" x2="1"><stop offset="0" stop-color="#0a0b0c"/><stop offset="0.25" stop-color="#0e0f10"/><stop offset="0.7" stop-color="#08090a"/><stop offset="1" stop-color="#060708"/></linearGradient><filter id="b2" x="-300%" width="700%"><feGaussianBlur stdDeviation="0.6 0"/></filter></defs><rect x="647.5" y="375.5" width="300" height="22" fill="url(#sg)" stroke="#2fc02f" stroke-width="1.6"/><rect x="638" y="376" width="8" height="10" fill="#3ab83a" stroke="#116611" stroke-width="0.6"/><text x="642" y="384.5" font-family="Liberation Sans" font-size="8.5" fill="#fff" text-anchor="middle">5</text><rect x="728.0" y="377" width="3" height="19.5" fill="#fff" opacity="1.0" filter="url(#b2)"/><rect x="731.5" y="377" width="2" height="19.5" fill="#fff" opacity="0.85" filter="url(#b2)"/><rect x="734.4" y="377" width="1.2" height="19.5" fill="#fff" opacity="0.55" filter="url(#b2)"/><rect x="737.9" y="377" width="1.2" height="19.5" fill="#fff" opacity="0.5" filter="url(#b2)"/><rect x="740.4" y="377" width="1.2" height="19.5" fill="#fff" opacity="0.45" filter="url(#b2)"/><rect x="761.65" y="377" width="1.3" height="19.5" fill="#fff" opacity="0.8" filter="url(#b2)"/><rect x="764.85" y="377" width="1.3" height="19.5" fill="#fff" opacity="0.7" filter="url(#b2)"/><rect x="803.7" y="377" width="1.6" height="19.5" fill="#fff" opacity="0.45" filter="url(#b2)"/><rect x="807.2" y="377" width="1.6" height="19.5" fill="#fff" opacity="0.5" filter="url(#b2)"/><rect x="820.7" y="377" width="1.6" height="19.5" fill="#fff" opacity="0.55" filter="url(#b2)"/><rect x="824.2" y="377" width="1.6" height="19.5" fill="#fff" opacity="0.6" filter="url(#b2)"/><rect x="826.9" y="377" width="1.2" height="19.5" fill="#fff" opacity="0.35" filter="url(#b2)"/><rect x="832.4" y="377" width="1.2" height="19.5" fill="#fff" opacity="0.28" filter="url(#b2)"/><rect x="835.4" y="377" width="1.2" height="19.5" fill="#fff" opacity="0.22" filter="url(#b2)"/><path d="M733.6 397V401.6" stroke="#4054d8" stroke-width="1"/><path d="M740 397V421" stroke="#4054d8" stroke-width="1"/><path d="M764.8 397V401.6" stroke="#4054d8" stroke-width="1"/><path d="M806.4 397V421" stroke="#4054d8" stroke-width="1"/><path d="M823.6 397V401.6" stroke="#4054d8" stroke-width="1"/><path d="M834 397V421" stroke="#4054d8" stroke-width="1"/><rect x="733.6" y="401.6" width="22" height="10.5" fill="#d6dae2" stroke="#4a5ad8" stroke-width="1"/><text x="744.6" y="410.40000000000003" font-family="Liberation Sans" font-size="9.2" fill="#222" text-anchor="middle">2430</text><rect x="740" y="421" width="22" height="10.5" fill="#d6dae2" stroke="#4a5ad8" stroke-width="1"/><text x="751" y="429.8" font-family="Liberation Sans" font-size="9.2" fill="#222" text-anchor="middle">2144</text><rect x="764.8" y="401.6" width="22" height="10.5" fill="#d6dae2" stroke="#4a5ad8" stroke-width="1"/><text x="775.8" y="410.40000000000003" font-family="Liberation Sans" font-size="9.2" fill="#222" text-anchor="middle">1342</text><rect x="806.4" y="421" width="22" height="10.5" fill="#d6dae2" stroke="#4a5ad8" stroke-width="1"/><text x="817.4" y="429.8" font-family="Liberation Sans" font-size="9.2" fill="#222" text-anchor="middle">625</text><rect x="823.6" y="401.6" width="22" height="10.5" fill="#d6dae2" stroke="#4a5ad8" stroke-width="1"/><text x="834.6" y="410.40000000000003" font-family="Liberation Sans" font-size="9.2" fill="#222" text-anchor="middle">455</text><rect x="834" y="421" width="22" height="10.5" fill="#d6dae2" stroke="#4a5ad8" stroke-width="1"/><text x="845" y="429.8" font-family="Liberation Sans" font-size="9.2" fill="#222" text-anchor="middle">375</text></svg>
<div class="a" style="left:153px;top:532px;width:846px;height:228px;background:linear-gradient(#acd3e9,#cae6f7 22px,#d0e9f8 23px,#d0e9f8);border:1px solid #56636e;border-radius:4px 4px 0 0"></div>
<svg class="a" style="left:161px;top:538px" width="13" height="12"><rect x="0.5" y="0.5" width="12" height="11" fill="#dfe3ef" stroke="#2a34b0"/><rect x="0.5" y="0.5" width="12" height="3" fill="#3040c8"/><path d="M2 7h9M2 9h9" stroke="#555"/></svg>
<div class="t" style="left:177.5px;top:541.1px;font-size:9.3px;color:#4d6478;">Measurements Window [All Lanes]</div>
<div style="position:absolute;top:540px;left:921.4px;width:22px;height:12.5px;border:1px solid #a3c1d8;border-radius:3px;background:linear-gradient(#d8eaf7,#c8e0f2 50%,#bcd8ee 51%,#d0e6f6)"></div>
<div style="position:absolute;top:540px;left:945.0px;width:22px;height:12.5px;border:1px solid #a3c1d8;border-radius:3px;background:linear-gradient(#d8eaf7,#c8e0f2 50%,#bcd8ee 51%,#d0e6f6)"></div>
<div style="position:absolute;top:540px;left:968.6px;width:22px;height:12.5px;border:1px solid #a3c1d8;border-radius:3px;background:linear-gradient(#d8eaf7,#c8e0f2 50%,#bcd8ee 51%,#d0e6f6)"></div>
<div class="a" style="left:928.0px;top:546px;width:8.5px;height:3.5px;border:1px solid #6f8294;border-radius:1px;background:#eef4f9"></div>
<div class="a" style="left:951.9px;top:543px;width:8.5px;height:6.5px;border:1px solid #6f8294;border-top-width:2px;background:#dfe9f2"></div>
<svg class="a" style="left:975.6px;top:543px" width="10" height="8"><path d="M1.5 1L8.5 7M8.5 1L1.5 7" stroke="#6d8092" stroke-width="2.1"/></svg>
<div class="a" style="left:160px;top:554px;width:832px;height:198px;background:#fff;border-top:1px solid #8d9aa5;border-left:1px solid #8d9aa5"></div>
<div class="a" style="left:161px;top:555px;width:711px;height:27px;background:#f1f2f4"></div>
<svg class="a" style="left:160px;top:554px" width="720" height="160" viewBox="160 554 720 160"><path d="M161.5 555V582" stroke="#44484c" stroke-width="1.6"/><path d="M161.5 582V707" stroke="#c9cdd1" stroke-width="1"/><path d="M216.2 555V582" stroke="#44484c" stroke-width="1.6"/><path d="M216.2 582V707" stroke="#c9cdd1" stroke-width="1"/><path d="M270.9 555V582" stroke="#44484c" stroke-width="1.6"/><path d="M270.9 582V707" stroke="#c9cdd1" stroke-width="1"/><path d="M325.6 555V582" stroke="#44484c" stroke-width="1.6"/><path d="M325.6 582V707" stroke="#c9cdd1" stroke-width="1"/><path d="M380.3 555V582" stroke="#44484c" stroke-width="1.6"/><path d="M380.3 582V707" stroke="#c9cdd1" stroke-width="1"/><path d="M435.0 555V582" stroke="#44484c" stroke-width="1.6"/><path d="M435.0 582V707" stroke="#c9cdd1" stroke-width="1"/><path d="M489.7 555V582" stroke="#44484c" stroke-width="1.6"/><path d="M489.7 582V707" stroke="#c9cdd1" stroke-width="1"/><path d="M544.4 555V582" stroke="#44484c" stroke-width="1.6"/><path d="M544.4 582V707" stroke="#c9cdd1" stroke-width="1"/><path d="M599.1 555V582" stroke="#44484c" stroke-width="1.6"/><path d="M599.1 582V707" stroke="#c9cdd1" stroke-width="1"/><path d="M653.8 555V582" stroke="#44484c" stroke-width="1.6"/><path d="M653.8 582V707" stroke="#c9cdd1" stroke-width="1"/><path d="M708.5 555V582" stroke="#44484c" stroke-width="1.6"/><path d="M708.5 582V707" stroke="#c9cdd1" stroke-width="1"/><path d="M763.2 555V582" stroke="#44484c" stroke-width="1.6"/><path d="M763.2 582V707" stroke="#c9cdd1" stroke-width="1"/><path d="M817.9 555V582" stroke="#44484c" stroke-width="1.6"/><path d="M817.9 582V707" stroke="#c9cdd1" stroke-width="1"/><path d="M872.6 555V582" stroke="#44484c" stroke-width="1.6"/><path d="M872.6 582V707" stroke="#c9cdd1" stroke-width="1"/><path d="M161 555.5H873" stroke="#a0a5aa" stroke-width="1"/><path d="M161 569.3H873" stroke="#3a3e42" stroke-width="1.5"/><path d="M161 582H873" stroke="#2e3236" stroke-width="1.6"/><path d="M161 594.0H873" stroke="#d4d7da" stroke-width="1"/><path d="M161 606.5H873" stroke="#d4d7da" stroke-width="1"/><path d="M161 619.0H873" stroke="#d4d7da" stroke-width="1"/><path d="M161 631.6H873" stroke="#d4d7da" stroke-width="1"/><path d="M161 644.1H873" stroke="#d4d7da" stroke-width="1"/><path d="M161 656.6H873" stroke="#d4d7da" stroke-width="1"/><path d="M161 669.1H873" stroke="#d4d7da" stroke-width="1"/><path d="M161 681.6H873" stroke="#d4d7da" stroke-width="1"/><path d="M161 694.2H873" stroke="#d4d7da" stroke-width="1"/><path d="M161 706.7H873" stroke="#d4d7da" stroke-width="1"/><path d="M161 707H873" stroke="#c9cdd1" stroke-width="1"/></svg>
<div class="t" style="left:88.85px;width:200px;text-align:center;top:558.11px;font-size:8.3px;color:#2a2c44;">Lane 1</div>
<div class="t" style="left:88.85px;width:200px;text-align:center;top:571.51px;font-size:8.5px;color:#2a2c3a;-webkit-text-stroke:0.5px #2a2c3a">Base Pairs</div>
<div class="t" style="left:143.54999999999998px;width:200px;text-align:center;top:558.11px;font-size:8.3px;color:#2a2c44;">Lane 2</div>
<div class="t" style="left:143.54999999999998px;width:200px;text-align:center;top:571.51px;font-size:8.5px;color:#2a2c3a;-webkit-text-stroke:0.5px #2a2c3a">Base Pairs</div>
<div class="t" style="left:198.25px;width:200px;text-align:center;top:558.11px;font-size:8.3px;color:#2a2c44;">Lane 3</div>
<div class="t" style="left:198.25px;width:200px;text-align:center;top:571.51px;font-size:8.5px;color:#2a2c3a;-webkit-text-stroke:0.5px #2a2c3a">Base Pairs</div>
<div class="t" style="left:252.95000000000005px;width:200px;text-align:center;top:558.11px;font-size:8.3px;color:#2a2c44;">Lane 4</div>
<div class="t" style="left:252.95000000000005px;width:200px;text-align:center;top:571.51px;font-size:8.5px;color:#2a2c3a;-webkit-text-stroke:0.5px #2a2c3a">Base Pairs</div>
<div class="t" style="left:307.65px;width:200px;text-align:center;top:558.11px;font-size:8.3px;color:#2a2c44;">Lane 5</div>
<div class="t" style="left:307.65px;width:200px;text-align:center;top:571.51px;font-size:8.5px;color:#2a2c3a;-webkit-text-stroke:0.5px #2a2c3a">Base Pairs</div>
<div class="t" style="left:362.35px;width:200px;text-align:center;top:558.11px;font-size:8.3px;color:#2a2c44;">Lane 6</div>
<div class="t" style="left:362.35px;width:200px;text-align:center;top:571.51px;font-size:8.5px;color:#2a2c3a;-webkit-text-stroke:0.5px #2a2c3a">Base Pairs</div>
<div class="t" style="left:417.05000000000007px;width:200px;text-align:center;top:558.11px;font-size:8.3px;color:#2a2c44;">Lane 7</div>
<div class="t" style="left:417.05000000000007px;width:200px;text-align:center;top:571.51px;font-size:8.5px;color:#2a2c3a;-webkit-text-stroke:0.5px #2a2c3a">Base Pairs</div>
<div class="t" style="left:471.75px;width:200px;text-align:center;top:558.11px;font-size:8.3px;color:#2a2c44;">Lane 8</div>
<div class="t" style="left:471.75px;width:200px;text-align:center;top:571.51px;font-size:8.5px;color:#2a2c3a;-webkit-text-stroke:0.5px #2a2c3a">Base Pairs</div>
<div class="t" style="left:526.45px;width:200px;text-align:center;top:558.11px;font-size:8.3px;color:#2a2c44;">Lane 9</div>
<div class="t" style="left:526.45px;width:200px;text-align:center;top:571.51px;font-size:8.5px;color:#2a2c3a;-webkit-text-stroke:0.5px #2a2c3a">Base Pairs</div>
<div class="t" style="left:581.15px;width:200px;text-align:center;top:558.11px;font-size:8.3px;color:#2a2c44;">Lane 10</div>
<div class="t" style="left:581.15px;width:200px;text-align:center;top:571.51px;font-size:8.5px;color:#2a2c3a;-webkit-text-stroke:0.5px #2a2c3a">Base Pairs</div>
<div class="t" style="left:635.85px;width:200px;text-align:center;top:558.11px;font-size:8.3px;color:#2a2c44;">Lane 11</div>
<div class="t" style="left:635.85px;width:200px;text-align:center;top:571.51px;font-size:8.5px;color:#2a2c3a;-webkit-text-stroke:0.5px #2a2c3a">Base Pairs</div>
<div class="t" style="left:690.5500000000001px;width:200px;text-align:center;top:558.11px;font-size:8.3px;color:#2a2c44;">Lane 12</div>
<div class="t" style="left:690.5500000000001px;width:200px;text-align:center;top:571.51px;font-size:8.5px;color:#2a2c3a;-webkit-text-stroke:0.5px #2a2c3a">Base Pairs</div>
<div class="t" style="left:745.25px;width:200px;text-align:center;top:558.11px;font-size:8.3px;color:#2a2c44;">Lane 13</div>
<div class="t" style="left:745.25px;width:200px;text-align:center;top:571.51px;font-size:8.5px;color:#2a2c3a;-webkit-text-stroke:0.5px #2a2c3a">Base Pairs</div>
<div class="t" style="left:-87.80000000000001px;width:300px;text-align:right;top:583.41px;font-size:8.6px;color:#262626;font-weight:bold;-webkit-text-stroke:0px">10000.000</div>
<div class="t" style="left:-87.80000000000001px;width:300px;text-align:right;top:595.93px;font-size:8.6px;color:#262626;font-weight:bold;-webkit-text-stroke:0px">8000.000</div>
<div class="t" style="left:-87.80000000000001px;width:300px;text-align:right;top:608.45px;font-size:8.6px;color:#262626;font-weight:bold;-webkit-text-stroke:0px">6000.000</div>
<div class="t" style="left:-87.80000000000001px;width:300px;text-align:right;top:620.97px;font-size:8.6px;color:#262626;font-weight:bold;-webkit-text-stroke:0px">5000.000</div>
<div class="t" style="left:-87.80000000000001px;width:300px;text-align:right;top:633.49px;font-size:8.6px;color:#262626;font-weight:bold;-webkit-text-stroke:0px">4000.000</div>
<div class="t" style="left:-87.80000000000001px;width:300px;text-align:right;top:646.01px;font-size:8.6px;color:#262626;font-weight:bold;-webkit-text-stroke:0px">3000.000</div>
<div class="t" style="left:-87.80000000000001px;width:300px;text-align:right;top:658.53px;font-size:8.6px;color:#262626;font-weight:bold;-webkit-text-stroke:0px">2000.000</div>
<div class="t" style="left:-87.80000000000001px;width:300px;text-align:right;top:671.05px;font-size:8.6px;color:#262626;font-weight:bold;-webkit-text-stroke:0px">1500.000</div>
<div class="t" style="left:-87.80000000000001px;width:300px;text-align:right;top:683.57px;font-size:8.6px;color:#262626;font-weight:bold;-webkit-text-stroke:0px">1000.000</div>
<div class="t" style="left:-33.10000000000002px;width:300px;text-align:right;top:583.41px;font-size:8.6px;color:#262626;-webkit-text-stroke:0.12px">5194.789</div>
<div class="t" style="left:-33.10000000000002px;width:300px;text-align:right;top:595.93px;font-size:8.6px;color:#262626;-webkit-text-stroke:0.12px">2768.085</div>
<div class="t" style="left:-33.10000000000002px;width:300px;text-align:right;top:608.45px;font-size:8.6px;color:#262626;-webkit-text-stroke:0.12px">2192.439</div>
<div class="t" style="left:-33.10000000000002px;width:300px;text-align:right;top:620.97px;font-size:8.6px;color:#ec3048;font-style:italic;-webkit-text-stroke:0.05px">438.596</div>
<div class="t" style="left:-33.10000000000002px;width:300px;text-align:right;top:633.49px;font-size:8.6px;color:#ec3048;font-style:italic;-webkit-text-stroke:0.05px">359.649</div>
<div class="t" style="left:21.600000000000023px;width:300px;text-align:right;top:583.41px;font-size:8.6px;color:#262626;-webkit-text-stroke:0.12px">5746.855</div>
<div class="t" style="left:21.600000000000023px;width:300px;text-align:right;top:595.93px;font-size:8.6px;color:#262626;-webkit-text-stroke:0.12px">3180.884</div>
<div class="t" style="left:21.600000000000023px;width:300px;text-align:right;top:608.45px;font-size:8.6px;color:#262626;-webkit-text-stroke:0.12px">1764.235</div>
<div class="t" style="left:21.600000000000023px;width:300px;text-align:right;top:620.97px;font-size:8.6px;color:#ec3048;font-style:italic;-webkit-text-stroke:0.05px">339.286</div>
<div class="t" style="left:76.30000000000001px;width:300px;text-align:right;top:583.41px;font-size:8.6px;color:#262626;-webkit-text-stroke:0.12px">3777.123</div>
<div class="t" style="left:76.30000000000001px;width:300px;text-align:right;top:595.93px;font-size:8.6px;color:#262626;-webkit-text-stroke:0.12px">1383.101</div>
<div class="t" style="left:131.0px;width:300px;text-align:right;top:583.41px;font-size:8.6px;color:#262626;-webkit-text-stroke:0.12px">2429.936</div>
<div class="t" style="left:131.0px;width:300px;text-align:right;top:595.93px;font-size:8.6px;color:#262626;-webkit-text-stroke:0.12px">2143.529</div>
<div class="t" style="left:131.0px;width:300px;text-align:right;top:608.45px;font-size:8.6px;color:#262626;-webkit-text-stroke:0.12px">1341.763</div>
<div class="t" style="left:131.0px;width:300px;text-align:right;top:620.97px;font-size:8.6px;color:#ec3048;font-style:italic;-webkit-text-stroke:0.05px">625.000</div>
<div class="t" style="left:131.0px;width:300px;text-align:right;top:633.49px;font-size:8.6px;color:#ec3048;font-style:italic;-webkit-text-stroke:0.05px">455.357</div>
<div class="t" style="left:131.0px;width:300px;text-align:right;top:646.01px;font-size:8.6px;color:#ec3048;font-style:italic;-webkit-text-stroke:0.05px">375.000</div>
<div class="t" style="left:185.70000000000005px;width:300px;text-align:right;top:583.41px;font-size:8.6px;color:#262626;-webkit-text-stroke:0.12px">3473.435</div>
<div class="t" style="left:185.70000000000005px;width:300px;text-align:right;top:595.93px;font-size:8.6px;color:#262626;-webkit-text-stroke:0.12px">2322.566</div>
<div class="t" style="left:185.70000000000005px;width:300px;text-align:right;top:608.45px;font-size:8.6px;color:#ec3048;font-style:italic;-webkit-text-stroke:0.05px">883.929</div>
<div class="t" style="left:240.4000000000001px;width:300px;text-align:right;top:583.41px;font-size:8.6px;color:#262626;-webkit-text-stroke:0.12px">3788.998</div>
<div class="t" style="left:240.4000000000001px;width:300px;text-align:right;top:595.93px;font-size:8.6px;color:#262626;-webkit-text-stroke:0.12px">1107.604</div>
<div class="t" style="left:240.4000000000001px;width:300px;text-align:right;top:608.45px;font-size:8.6px;color:#ec3048;font-style:italic;-webkit-text-stroke:0.05px">964.286</div>
<div class="t" style="left:295.1px;width:300px;text-align:right;top:583.41px;font-size:8.6px;color:#ec3048;font-style:italic;-webkit-text-stroke:0.05px">10222.222</div>
<div class="t" style="left:295.1px;width:300px;text-align:right;top:595.93px;font-size:8.6px;color:#262626;-webkit-text-stroke:0.12px">8213.315</div>
<div class="t" style="left:295.1px;width:300px;text-align:right;top:608.45px;font-size:8.6px;color:#262626;-webkit-text-stroke:0.12px">6146.186</div>
<div class="t" style="left:295.1px;width:300px;text-align:right;top:620.97px;font-size:8.6px;color:#262626;-webkit-text-stroke:0.12px">5092.413</div>
<div class="t" style="left:295.1px;width:300px;text-align:right;top:633.49px;font-size:8.6px;color:#262626;-webkit-text-stroke:0.12px">4127.887</div>
<div class="t" style="left:295.1px;width:300px;text-align:right;top:646.01px;font-size:8.6px;color:#262626;-webkit-text-stroke:0.12px">3088.374</div>
<div class="t" style="left:295.1px;width:300px;text-align:right;top:658.53px;font-size:8.6px;color:#262626;-webkit-text-stroke:0.12px">2063.026</div>
<div class="t" style="left:295.1px;width:300px;text-align:right;top:671.05px;font-size:8.6px;color:#262626;-webkit-text-stroke:0.12px">1532.004</div>
<div class="t" style="left:295.1px;width:300px;text-align:right;top:683.57px;font-size:8.6px;color:#262626;-webkit-text-stroke:0.12px">1040.688</div>
<div class="t" style="left:349.79999999999995px;width:300px;text-align:right;top:583.41px;font-size:8.6px;color:#262626;-webkit-text-stroke:0.12px">2737.727</div>
<div class="t" style="left:349.79999999999995px;width:300px;text-align:right;top:595.93px;font-size:8.6px;color:#262626;-webkit-text-stroke:0.12px">2403.654</div>
<div class="t" style="left:349.79999999999995px;width:300px;text-align:right;top:608.45px;font-size:8.6px;color:#262626;-webkit-text-stroke:0.12px">2063.026</div>
<div class="t" style="left:349.79999999999995px;width:300px;text-align:right;top:620.97px;font-size:8.6px;color:#262626;-webkit-text-stroke:0.12px">1835.009</div>
<div class="t" style="left:349.79999999999995px;width:300px;text-align:right;top:633.49px;font-size:8.6px;color:#262626;-webkit-text-stroke:0.12px">1295.496</div>
<div class="t" style="left:404.5px;width:300px;text-align:right;top:583.41px;font-size:8.6px;color:#ec3048;font-style:italic;-webkit-text-stroke:0.05px">11111.111</div>
<div class="t" style="left:404.5px;width:300px;text-align:right;top:595.93px;font-size:8.6px;color:#262626;-webkit-text-stroke:0.12px">5000.000</div>
<div class="t" style="left:404.5px;width:300px;text-align:right;top:608.45px;font-size:8.6px;color:#262626;-webkit-text-stroke:0.12px">2788.259</div>
<div class="t" style="left:404.5px;width:300px;text-align:right;top:620.97px;font-size:8.6px;color:#262626;-webkit-text-stroke:0.12px">2502.590</div>
<div class="t" style="left:404.5px;width:300px;text-align:right;top:633.49px;font-size:8.6px;color:#262626;-webkit-text-stroke:0.12px">1285.037</div>
<div class="t" style="left:459.20000000000005px;width:300px;text-align:right;top:583.41px;font-size:8.6px;color:#262626;-webkit-text-stroke:0.12px">2582.642</div>
<div class="t" style="left:459.20000000000005px;width:300px;text-align:right;top:595.93px;font-size:8.6px;color:#262626;-webkit-text-stroke:0.12px">2104.131</div>
<div class="t" style="left:459.20000000000005px;width:300px;text-align:right;top:608.45px;font-size:8.6px;color:#262626;-webkit-text-stroke:0.12px">1426.900</div>
<div class="t" style="left:459.20000000000005px;width:300px;text-align:right;top:620.97px;font-size:8.6px;color:#ec3048;font-style:italic;-webkit-text-stroke:0.05px">645.455</div>
<div class="t" style="left:513.9000000000001px;width:300px;text-align:right;top:583.41px;font-size:8.6px;color:#262626;-webkit-text-stroke:0.12px">2726.567</div>
<div class="t" style="left:513.9000000000001px;width:300px;text-align:right;top:595.93px;font-size:8.6px;color:#262626;-webkit-text-stroke:0.12px">1291.714</div>
<div class="t" style="left:513.9000000000001px;width:300px;text-align:right;top:608.45px;font-size:8.6px;color:#ec3048;font-style:italic;-webkit-text-stroke:0.05px">718.182</div>
<div class="t" style="left:568.6px;width:300px;text-align:right;top:583.41px;font-size:8.6px;color:#262626;-webkit-text-stroke:0.12px">10000.000</div>
<div class="t" style="left:568.6px;width:300px;text-align:right;top:595.93px;font-size:8.6px;color:#262626;-webkit-text-stroke:0.12px">8000.000</div>
<div class="t" style="left:568.6px;width:300px;text-align:right;top:608.45px;font-size:8.6px;color:#262626;-webkit-text-stroke:0.12px">6000.000</div>
<div class="t" style="left:568.6px;width:300px;text-align:right;top:620.97px;font-size:8.6px;color:#262626;-webkit-text-stroke:0.12px">5000.000</div>
<div class="t" style="left:568.6px;width:300px;text-align:right;top:633.49px;font-size:8.6px;color:#262626;-webkit-text-stroke:0.12px">4000.000</div>
<div class="t" style="left:568.6px;width:300px;text-align:right;top:646.01px;font-size:8.6px;color:#262626;-webkit-text-stroke:0.12px">3000.000</div>
<div class="t" style="left:568.6px;width:300px;text-align:right;top:658.53px;font-size:8.6px;color:#262626;-webkit-text-stroke:0.12px">2020.552</div>
<div class="t" style="left:568.6px;width:300px;text-align:right;top:671.05px;font-size:8.6px;color:#262626;-webkit-text-stroke:0.12px">1521.309</div>
<div class="t" style="left:568.6px;width:300px;text-align:right;top:683.57px;font-size:8.6px;color:#262626;-webkit-text-stroke:0.12px">1025.066</div>
<div class="t" style="left:568.6px;width:300px;text-align:right;top:696.09px;font-size:8.6px;color:#ec3048;font-style:italic;-webkit-text-stroke:0.05px">381.818</div>
<div class="a" style="left:976px;top:555px;width:15px;height:183px;background:#f3f4f5"></div>
<div class="a" style="left:976px;top:555px;width:15px;height:12px;background:#fff;border:1px solid #c4c9ce"></div>
<svg class="a" style="left:980px;top:558.5px" width="7" height="4"><path d="M0 4L3.5 0 7 4z" fill="#111"/></svg>
<div class="a" style="left:976px;top:568px;width:14px;height:157px;background:#f7f7f7;border-left:1.5px solid #4c5258;border-bottom:1.5px solid #4c5258;border-right:1px solid #aab0b5"></div>
<svg class="a" style="left:980px;top:729.5px" width="7" height="4"><path d="M0 0L3.5 4 7 0z" fill="#111"/></svg>
<div class="a" style="left:161px;top:738px;width:830px;height:14px;background:#eef0f2"></div>
<div class="a" style="left:161px;top:738px;width:25px;height:13px;background:#fff;border:1px solid #9aa0a6;border-top:none"></div>
<div class="a" style="left:172.5px;top:738px;width:1px;height:13px;background:#9aa0a6"></div>
<svg class="a" style="left:164px;top:741px" width="5" height="7"><path d="M5 0L0 3.5 5 7z" fill="#555"/></svg>
<svg class="a" style="left:176px;top:741px" width="5" height="7"><path d="M0 0L5 3.5 0 7z" fill="#555"/></svg>
<svg class="a" style="left:186px;top:737px" width="200" height="15"><path d="M196 1H0" stroke="#333" stroke-width="1.2"/><path d="M0 1l5 13h71l5-13" fill="#e9ecee" stroke="#444" stroke-width="1"/><path d="M81 1l5 13h42l5-13" fill="#fff" stroke="#333" stroke-width="1.1"/><path d="M133 1l-5 13h61l5-13" fill="#e9ecee" stroke="#444" stroke-width="1"/></svg>
<div class="a" style="left:381px;top:738px;width:186px;height:13px;background:#c3cbd1;border-top:1.5px solid #333"></div>
<div class="t" style="left:197px;top:740.7px;font-size:9.5px;color:#333;">Selected Lane</div>
<div class="t" style="left:270.5px;top:740.96px;font-size:9.0px;color:#111;font-weight:bold;">All Lanes</div>
<div class="t" style="left:322px;top:740.65px;font-size:9.6px;color:#333;">Comparison</div>
<div class="a" style="left:567px;top:738px;width:409px;height:14px;background:#f3f4f5"></div>
<svg class="a" style="left:571px;top:741px" width="5" height="8"><path d="M5 0L0 4 5 8z" fill="#111"/></svg>
<div class="a" style="left:580px;top:738px;width:385px;height:13px;background:linear-gradient(#f8f9fa,#eceef0);border-top:1.5px solid #4c5258;border-left:1px solid #9aa;border-right:1.5px solid #4c5258"></div>
<svg class="a" style="left:968px;top:741px" width="5" height="8"><path d="M0 0L5 4 0 8z" fill="#111"/></svg>
</body></html>
